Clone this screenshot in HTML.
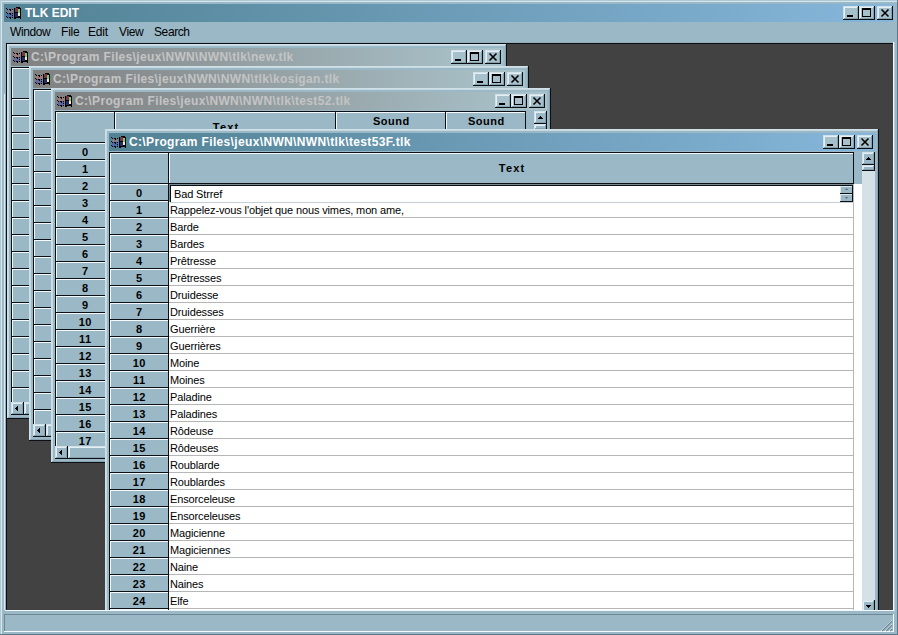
<!DOCTYPE html><html><head><meta charset="utf-8"><style>
html,body{margin:0;padding:0;}
body{width:898px;height:635px;overflow:hidden;position:relative;background:#9bb8c6;font-family:'Liberation Sans', sans-serif;}
div{position:absolute;box-sizing:border-box;}
</style></head><body>
<div style="left:0px;top:0px;width:898px;height:635px;background:#9bb8c6;"></div>
<div style="left:0px;top:0px;width:898px;height:1px;background:#b0c8d4;"></div>
<div style="left:0px;top:0px;width:1px;height:635px;background:#b0c8d4;"></div>
<div style="left:1px;top:1px;width:896px;height:1px;background:#d4e6ee;"></div>
<div style="left:1px;top:1px;width:1px;height:633px;background:#d4e6ee;"></div>
<div style="left:0px;top:634px;width:898px;height:1px;background:#5a788a;"></div>
<div style="left:897px;top:0px;width:1px;height:635px;background:#5a788a;"></div>
<div style="left:4px;top:4px;width:890px;height:18px;background:linear-gradient(to right,#528294,#86b6da);"></div>
<svg style="position:absolute;left:6px;top:7px" width="16" height="13" viewBox="0 0 16 13" shape-rendering="crispEdges">
<rect x="1" y="2" width="6" height="4" fill="#c07080" opacity="0.4"/>
<rect x="1" y="6" width="6" height="5" fill="#4050c0" opacity="0.5"/>
<g fill="#000">
<rect x="0" y="1" width="1" height="1"/><rect x="1" y="2" width="1" height="1"/><rect x="0" y="5" width="1" height="1"/><rect x="1" y="6" width="1" height="1"/><rect x="0" y="9" width="1" height="1"/><rect x="1" y="10" width="1" height="1"/>
<rect x="3" y="2" width="2" height="1"/><rect x="4" y="3" width="1" height="1"/><rect x="3" y="6" width="2" height="1"/><rect x="4" y="7" width="1" height="1"/><rect x="3" y="10" width="2" height="1"/><rect x="4" y="11" width="1" height="1"/>
<rect x="6" y="2" width="1" height="1"/><rect x="6" y="6" width="1" height="1"/><rect x="6" y="8" width="1" height="1"/><rect x="6" y="10" width="1" height="1"/>
</g>
<path d="M8 1h2v-1h4v1h1v11h-1v-1h-4v1h-2z" fill="#000"/>
<rect x="9" y="1" width="3" height="4" fill="#7a3444"/>
<rect x="12" y="2" width="2" height="4" fill="#78c880"/>
<rect x="9" y="6" width="3" height="4" fill="#222a70"/>
<rect x="12" y="6" width="2" height="3" fill="#f4ecb0"/>
</svg>
<div style="left:25px;top:7px;font:bold 12px/13px 'Liberation Sans', sans-serif;color:#fff;letter-spacing:0px;white-space:pre;">TLK EDIT</div>
<div style="left:843px;top:6px;width:16px;height:14px;background:#a6c0cc;"></div>
<div style="left:843px;top:6px;width:16px;height:1px;background:#d2e2ea;"></div>
<div style="left:843px;top:6px;width:1px;height:14px;background:#d2e2ea;"></div>
<div style="left:844px;top:7px;width:14px;height:1px;background:#e4eef3;"></div>
<div style="left:844px;top:7px;width:1px;height:12px;background:#e4eef3;"></div>
<div style="left:844px;top:18px;width:14px;height:1px;background:#86a0ae;"></div>
<div style="left:857px;top:7px;width:1px;height:12px;background:#86a0ae;"></div>
<div style="left:843px;top:19px;width:16px;height:1px;background:#0c1014;"></div>
<div style="left:858px;top:6px;width:1px;height:14px;background:#0c1014;"></div>
<div style="left:847px;top:15px;width:6px;height:2px;background:#000;"></div>
<div style="left:859px;top:6px;width:16px;height:14px;background:#a6c0cc;"></div>
<div style="left:859px;top:6px;width:16px;height:1px;background:#d2e2ea;"></div>
<div style="left:859px;top:6px;width:1px;height:14px;background:#d2e2ea;"></div>
<div style="left:860px;top:7px;width:14px;height:1px;background:#e4eef3;"></div>
<div style="left:860px;top:7px;width:1px;height:12px;background:#e4eef3;"></div>
<div style="left:860px;top:18px;width:14px;height:1px;background:#86a0ae;"></div>
<div style="left:873px;top:7px;width:1px;height:12px;background:#86a0ae;"></div>
<div style="left:859px;top:19px;width:16px;height:1px;background:#0c1014;"></div>
<div style="left:874px;top:6px;width:1px;height:14px;background:#0c1014;"></div>
<div style="left:862px;top:8px;width:9px;height:9px;border:1px solid #000;border-top-width:2px;box-sizing:border-box;"></div>
<div style="left:877px;top:6px;width:16px;height:14px;background:#a6c0cc;"></div>
<div style="left:877px;top:6px;width:16px;height:1px;background:#d2e2ea;"></div>
<div style="left:877px;top:6px;width:1px;height:14px;background:#d2e2ea;"></div>
<div style="left:878px;top:7px;width:14px;height:1px;background:#e4eef3;"></div>
<div style="left:878px;top:7px;width:1px;height:12px;background:#e4eef3;"></div>
<div style="left:878px;top:18px;width:14px;height:1px;background:#86a0ae;"></div>
<div style="left:891px;top:7px;width:1px;height:12px;background:#86a0ae;"></div>
<div style="left:877px;top:19px;width:16px;height:1px;background:#0c1014;"></div>
<div style="left:892px;top:6px;width:1px;height:14px;background:#0c1014;"></div>
<svg style="position:absolute;left:877px;top:6px" width="16" height="14" viewBox="0 0 16 14"><path d="M4.5 3.5L11.5 10.5M11.5 3.5L4.5 10.5" stroke="#000" stroke-width="1.6" fill="none"/></svg>
<div style="left:10px;top:26px;font:normal 12px/13px 'Liberation Sans', sans-serif;color:#000;letter-spacing:-0.4px;white-space:pre;">Window</div>
<div style="left:61px;top:26px;font:normal 12px/13px 'Liberation Sans', sans-serif;color:#000;letter-spacing:-0.2px;white-space:pre;">File</div>
<div style="left:88px;top:26px;font:normal 12px/13px 'Liberation Sans', sans-serif;color:#000;letter-spacing:-0.2px;white-space:pre;">Edit</div>
<div style="left:119px;top:26px;font:normal 12px/13px 'Liberation Sans', sans-serif;color:#000;letter-spacing:-0.4px;white-space:pre;">View</div>
<div style="left:154px;top:26px;font:normal 12px/13px 'Liberation Sans', sans-serif;color:#000;letter-spacing:-0.4px;white-space:pre;">Search</div>
<div style="left:5px;top:42px;width:889px;height:1px;background:#94adba;"></div>
<div style="left:5px;top:42px;width:1px;height:570px;background:#94adba;"></div>
<div style="left:6px;top:43px;width:888px;height:1px;background:#0c1014;"></div>
<div style="left:6px;top:43px;width:1px;height:568px;background:#0c1014;"></div>
<div style="left:5px;top:610px;width:890px;height:1px;background:#f2f8fb;"></div>
<div style="left:893px;top:42px;width:1px;height:569px;background:#f2f8fb;"></div>
<div style="left:894px;top:42px;width:1px;height:570px;background:#b9cdd8;"></div>
<div style="left:4px;top:94px;width:1px;height:516px;background:#dfecf1;"></div>
<div style="left:7px;top:44px;width:886px;height:566px;overflow:hidden;background:#424242">
<div style="left:0px;top:0px;width:500px;height:375px;background:#9bb8c6;"></div>
<div style="left:0px;top:0px;width:500px;height:1px;background:#cfe0e8;"></div>
<div style="left:0px;top:0px;width:1px;height:375px;background:#cfe0e8;"></div>
<div style="left:1px;top:1px;width:498px;height:1px;background:#c6d8e0;"></div>
<div style="left:1px;top:1px;width:1px;height:373px;background:#c6d8e0;"></div>
<div style="left:1px;top:373px;width:498px;height:1px;background:#8aa4b2;"></div>
<div style="left:498px;top:1px;width:1px;height:373px;background:#8aa4b2;"></div>
<div style="left:0px;top:374px;width:500px;height:1px;background:#0c1014;"></div>
<div style="left:499px;top:0px;width:1px;height:375px;background:#0c1014;"></div>
<div style="left:4px;top:4px;width:492px;height:18px;background:linear-gradient(to right,#808080,#aac4cc);"></div>
<svg style="position:absolute;left:6px;top:7px" width="16" height="13" viewBox="0 0 16 13" shape-rendering="crispEdges">
<rect x="1" y="2" width="6" height="4" fill="#c07080" opacity="0.4"/>
<rect x="1" y="6" width="6" height="5" fill="#4050c0" opacity="0.5"/>
<g fill="#000">
<rect x="0" y="1" width="1" height="1"/><rect x="1" y="2" width="1" height="1"/><rect x="0" y="5" width="1" height="1"/><rect x="1" y="6" width="1" height="1"/><rect x="0" y="9" width="1" height="1"/><rect x="1" y="10" width="1" height="1"/>
<rect x="3" y="2" width="2" height="1"/><rect x="4" y="3" width="1" height="1"/><rect x="3" y="6" width="2" height="1"/><rect x="4" y="7" width="1" height="1"/><rect x="3" y="10" width="2" height="1"/><rect x="4" y="11" width="1" height="1"/>
<rect x="6" y="2" width="1" height="1"/><rect x="6" y="6" width="1" height="1"/><rect x="6" y="8" width="1" height="1"/><rect x="6" y="10" width="1" height="1"/>
</g>
<path d="M8 1h2v-1h4v1h1v11h-1v-1h-4v1h-2z" fill="#000"/>
<rect x="9" y="1" width="3" height="4" fill="#7a3444"/>
<rect x="12" y="2" width="2" height="4" fill="#78c880"/>
<rect x="9" y="6" width="3" height="4" fill="#222a70"/>
<rect x="12" y="6" width="2" height="3" fill="#f4ecb0"/>
</svg>
<div style="left:24px;top:7px;font:bold 12px/13px 'Liberation Sans', sans-serif;color:#c4c4c4;letter-spacing:0.35px;white-space:pre;">C:\Program Files\jeux\NWN\NWN\tlk\new.tlk</div>
<div style="left:444px;top:6px;width:16px;height:14px;background:#a6c0cc;"></div>
<div style="left:444px;top:6px;width:16px;height:1px;background:#d2e2ea;"></div>
<div style="left:444px;top:6px;width:1px;height:14px;background:#d2e2ea;"></div>
<div style="left:445px;top:7px;width:14px;height:1px;background:#e4eef3;"></div>
<div style="left:445px;top:7px;width:1px;height:12px;background:#e4eef3;"></div>
<div style="left:445px;top:18px;width:14px;height:1px;background:#86a0ae;"></div>
<div style="left:458px;top:7px;width:1px;height:12px;background:#86a0ae;"></div>
<div style="left:444px;top:19px;width:16px;height:1px;background:#0c1014;"></div>
<div style="left:459px;top:6px;width:1px;height:14px;background:#0c1014;"></div>
<div style="left:448px;top:15px;width:6px;height:2px;background:#000;"></div>
<div style="left:460px;top:6px;width:16px;height:14px;background:#a6c0cc;"></div>
<div style="left:460px;top:6px;width:16px;height:1px;background:#d2e2ea;"></div>
<div style="left:460px;top:6px;width:1px;height:14px;background:#d2e2ea;"></div>
<div style="left:461px;top:7px;width:14px;height:1px;background:#e4eef3;"></div>
<div style="left:461px;top:7px;width:1px;height:12px;background:#e4eef3;"></div>
<div style="left:461px;top:18px;width:14px;height:1px;background:#86a0ae;"></div>
<div style="left:474px;top:7px;width:1px;height:12px;background:#86a0ae;"></div>
<div style="left:460px;top:19px;width:16px;height:1px;background:#0c1014;"></div>
<div style="left:475px;top:6px;width:1px;height:14px;background:#0c1014;"></div>
<div style="left:463px;top:8px;width:9px;height:9px;border:1px solid #000;border-top-width:2px;box-sizing:border-box;"></div>
<div style="left:478px;top:6px;width:16px;height:14px;background:#a6c0cc;"></div>
<div style="left:478px;top:6px;width:16px;height:1px;background:#d2e2ea;"></div>
<div style="left:478px;top:6px;width:1px;height:14px;background:#d2e2ea;"></div>
<div style="left:479px;top:7px;width:14px;height:1px;background:#e4eef3;"></div>
<div style="left:479px;top:7px;width:1px;height:12px;background:#e4eef3;"></div>
<div style="left:479px;top:18px;width:14px;height:1px;background:#86a0ae;"></div>
<div style="left:492px;top:7px;width:1px;height:12px;background:#86a0ae;"></div>
<div style="left:478px;top:19px;width:16px;height:1px;background:#0c1014;"></div>
<div style="left:493px;top:6px;width:1px;height:14px;background:#0c1014;"></div>
<svg style="position:absolute;left:478px;top:6px" width="16" height="14" viewBox="0 0 16 14"><path d="M4.5 3.5L11.5 10.5M11.5 3.5L4.5 10.5" stroke="#000" stroke-width="1.6" fill="none"/></svg>
<div style="left:4px;top:23px;width:492px;height:348px;overflow:hidden;background:#fff">
<div style="left:0px;top:0px;width:479px;height:335px;background:#fff;"></div>
<div style="left:0px;top:0px;width:479px;height:32px;background:#9bb8c6;"></div>
<div style="left:0px;top:0px;width:1px;height:335px;background:#0c1014;"></div>
<div style="left:1px;top:1px;width:59px;height:31px;background:#9bb8c6;"></div>
<div style="left:1px;top:1px;width:58px;height:1px;background:#f2f8fb;"></div>
<div style="left:1px;top:1px;width:1px;height:30px;background:#f2f8fb;"></div>
<div style="left:1px;top:31px;width:59px;height:1px;background:#0c1014;"></div>
<div style="left:59px;top:1px;width:1px;height:31px;background:#0c1014;"></div>
<div style="left:60px;top:1px;width:221px;height:31px;background:#9bb8c6;"></div>
<div style="left:60px;top:1px;width:220px;height:1px;background:#f2f8fb;"></div>
<div style="left:60px;top:1px;width:1px;height:30px;background:#f2f8fb;"></div>
<div style="left:60px;top:31px;width:221px;height:1px;background:#0c1014;"></div>
<div style="left:280px;top:1px;width:1px;height:31px;background:#0c1014;"></div>
<div style="left:60.6px;top:10px;font:bold 11px/13px 'Liberation Sans', sans-serif;color:#000;letter-spacing:1.2px;white-space:pre;width:221px;text-align:center;">Text</div>
<div style="left:281px;top:1px;width:110px;height:31px;background:#9bb8c6;"></div>
<div style="left:281px;top:1px;width:109px;height:1px;background:#f2f8fb;"></div>
<div style="left:281px;top:1px;width:1px;height:30px;background:#f2f8fb;"></div>
<div style="left:281px;top:31px;width:110px;height:1px;background:#0c1014;"></div>
<div style="left:390px;top:1px;width:1px;height:31px;background:#0c1014;"></div>
<div style="left:281.25px;top:4px;font:bold 11px/13px 'Liberation Sans', sans-serif;color:#000;letter-spacing:0.5px;white-space:pre;width:110px;text-align:center;">Sound</div>
<div style="left:391px;top:1px;width:80px;height:31px;background:#9bb8c6;"></div>
<div style="left:391px;top:1px;width:79px;height:1px;background:#f2f8fb;"></div>
<div style="left:391px;top:1px;width:1px;height:30px;background:#f2f8fb;"></div>
<div style="left:391px;top:31px;width:80px;height:1px;background:#0c1014;"></div>
<div style="left:470px;top:1px;width:1px;height:31px;background:#0c1014;"></div>
<div style="left:391.25px;top:4px;font:bold 11px/13px 'Liberation Sans', sans-serif;color:#000;letter-spacing:0.5px;white-space:pre;width:80px;text-align:center;">Sound</div>
<div style="left:0px;top:0px;width:471px;height:1px;background:#0c1014;"></div>
<div style="left:1px;top:32px;width:59px;height:17px;background:#9bb8c6;"></div>
<div style="left:1px;top:32px;width:58px;height:1px;background:#f2f8fb;"></div>
<div style="left:1px;top:32px;width:1px;height:16px;background:#f2f8fb;"></div>
<div style="left:1px;top:48px;width:59px;height:1px;background:#0c1014;"></div>
<div style="left:59px;top:32px;width:1px;height:17px;background:#0c1014;"></div>
<div style="left:0px;top:35px;font:bold 11px/13px 'Liberation Sans', sans-serif;color:#000;letter-spacing:0px;white-space:pre;width:60px;text-align:center;">0</div>
<div style="left:60px;top:48px;width:221px;height:1px;background:#b6b6b6;"></div>
<div style="left:280px;top:32px;width:1px;height:17px;background:#b6b6b6;"></div>
<div style="left:281px;top:48px;width:110px;height:1px;background:#b6b6b6;"></div>
<div style="left:390px;top:32px;width:1px;height:17px;background:#b6b6b6;"></div>
<div style="left:391px;top:48px;width:80px;height:1px;background:#b6b6b6;"></div>
<div style="left:470px;top:32px;width:1px;height:17px;background:#b6b6b6;"></div>
<div style="left:1px;top:49px;width:59px;height:17px;background:#9bb8c6;"></div>
<div style="left:1px;top:49px;width:58px;height:1px;background:#f2f8fb;"></div>
<div style="left:1px;top:49px;width:1px;height:16px;background:#f2f8fb;"></div>
<div style="left:1px;top:65px;width:59px;height:1px;background:#0c1014;"></div>
<div style="left:59px;top:49px;width:1px;height:17px;background:#0c1014;"></div>
<div style="left:0px;top:52px;font:bold 11px/13px 'Liberation Sans', sans-serif;color:#000;letter-spacing:0px;white-space:pre;width:60px;text-align:center;">1</div>
<div style="left:60px;top:65px;width:221px;height:1px;background:#b6b6b6;"></div>
<div style="left:280px;top:49px;width:1px;height:17px;background:#b6b6b6;"></div>
<div style="left:281px;top:65px;width:110px;height:1px;background:#b6b6b6;"></div>
<div style="left:390px;top:49px;width:1px;height:17px;background:#b6b6b6;"></div>
<div style="left:391px;top:65px;width:80px;height:1px;background:#b6b6b6;"></div>
<div style="left:470px;top:49px;width:1px;height:17px;background:#b6b6b6;"></div>
<div style="left:1px;top:66px;width:59px;height:17px;background:#9bb8c6;"></div>
<div style="left:1px;top:66px;width:58px;height:1px;background:#f2f8fb;"></div>
<div style="left:1px;top:66px;width:1px;height:16px;background:#f2f8fb;"></div>
<div style="left:1px;top:82px;width:59px;height:1px;background:#0c1014;"></div>
<div style="left:59px;top:66px;width:1px;height:17px;background:#0c1014;"></div>
<div style="left:0px;top:69px;font:bold 11px/13px 'Liberation Sans', sans-serif;color:#000;letter-spacing:0px;white-space:pre;width:60px;text-align:center;">2</div>
<div style="left:60px;top:82px;width:221px;height:1px;background:#b6b6b6;"></div>
<div style="left:280px;top:66px;width:1px;height:17px;background:#b6b6b6;"></div>
<div style="left:281px;top:82px;width:110px;height:1px;background:#b6b6b6;"></div>
<div style="left:390px;top:66px;width:1px;height:17px;background:#b6b6b6;"></div>
<div style="left:391px;top:82px;width:80px;height:1px;background:#b6b6b6;"></div>
<div style="left:470px;top:66px;width:1px;height:17px;background:#b6b6b6;"></div>
<div style="left:1px;top:83px;width:59px;height:17px;background:#9bb8c6;"></div>
<div style="left:1px;top:83px;width:58px;height:1px;background:#f2f8fb;"></div>
<div style="left:1px;top:83px;width:1px;height:16px;background:#f2f8fb;"></div>
<div style="left:1px;top:99px;width:59px;height:1px;background:#0c1014;"></div>
<div style="left:59px;top:83px;width:1px;height:17px;background:#0c1014;"></div>
<div style="left:0px;top:86px;font:bold 11px/13px 'Liberation Sans', sans-serif;color:#000;letter-spacing:0px;white-space:pre;width:60px;text-align:center;">3</div>
<div style="left:60px;top:99px;width:221px;height:1px;background:#b6b6b6;"></div>
<div style="left:280px;top:83px;width:1px;height:17px;background:#b6b6b6;"></div>
<div style="left:281px;top:99px;width:110px;height:1px;background:#b6b6b6;"></div>
<div style="left:390px;top:83px;width:1px;height:17px;background:#b6b6b6;"></div>
<div style="left:391px;top:99px;width:80px;height:1px;background:#b6b6b6;"></div>
<div style="left:470px;top:83px;width:1px;height:17px;background:#b6b6b6;"></div>
<div style="left:1px;top:100px;width:59px;height:17px;background:#9bb8c6;"></div>
<div style="left:1px;top:100px;width:58px;height:1px;background:#f2f8fb;"></div>
<div style="left:1px;top:100px;width:1px;height:16px;background:#f2f8fb;"></div>
<div style="left:1px;top:116px;width:59px;height:1px;background:#0c1014;"></div>
<div style="left:59px;top:100px;width:1px;height:17px;background:#0c1014;"></div>
<div style="left:0px;top:103px;font:bold 11px/13px 'Liberation Sans', sans-serif;color:#000;letter-spacing:0px;white-space:pre;width:60px;text-align:center;">4</div>
<div style="left:60px;top:116px;width:221px;height:1px;background:#b6b6b6;"></div>
<div style="left:280px;top:100px;width:1px;height:17px;background:#b6b6b6;"></div>
<div style="left:281px;top:116px;width:110px;height:1px;background:#b6b6b6;"></div>
<div style="left:390px;top:100px;width:1px;height:17px;background:#b6b6b6;"></div>
<div style="left:391px;top:116px;width:80px;height:1px;background:#b6b6b6;"></div>
<div style="left:470px;top:100px;width:1px;height:17px;background:#b6b6b6;"></div>
<div style="left:1px;top:117px;width:59px;height:17px;background:#9bb8c6;"></div>
<div style="left:1px;top:117px;width:58px;height:1px;background:#f2f8fb;"></div>
<div style="left:1px;top:117px;width:1px;height:16px;background:#f2f8fb;"></div>
<div style="left:1px;top:133px;width:59px;height:1px;background:#0c1014;"></div>
<div style="left:59px;top:117px;width:1px;height:17px;background:#0c1014;"></div>
<div style="left:0px;top:120px;font:bold 11px/13px 'Liberation Sans', sans-serif;color:#000;letter-spacing:0px;white-space:pre;width:60px;text-align:center;">5</div>
<div style="left:60px;top:133px;width:221px;height:1px;background:#b6b6b6;"></div>
<div style="left:280px;top:117px;width:1px;height:17px;background:#b6b6b6;"></div>
<div style="left:281px;top:133px;width:110px;height:1px;background:#b6b6b6;"></div>
<div style="left:390px;top:117px;width:1px;height:17px;background:#b6b6b6;"></div>
<div style="left:391px;top:133px;width:80px;height:1px;background:#b6b6b6;"></div>
<div style="left:470px;top:117px;width:1px;height:17px;background:#b6b6b6;"></div>
<div style="left:1px;top:134px;width:59px;height:17px;background:#9bb8c6;"></div>
<div style="left:1px;top:134px;width:58px;height:1px;background:#f2f8fb;"></div>
<div style="left:1px;top:134px;width:1px;height:16px;background:#f2f8fb;"></div>
<div style="left:1px;top:150px;width:59px;height:1px;background:#0c1014;"></div>
<div style="left:59px;top:134px;width:1px;height:17px;background:#0c1014;"></div>
<div style="left:0px;top:137px;font:bold 11px/13px 'Liberation Sans', sans-serif;color:#000;letter-spacing:0px;white-space:pre;width:60px;text-align:center;">6</div>
<div style="left:60px;top:150px;width:221px;height:1px;background:#b6b6b6;"></div>
<div style="left:280px;top:134px;width:1px;height:17px;background:#b6b6b6;"></div>
<div style="left:281px;top:150px;width:110px;height:1px;background:#b6b6b6;"></div>
<div style="left:390px;top:134px;width:1px;height:17px;background:#b6b6b6;"></div>
<div style="left:391px;top:150px;width:80px;height:1px;background:#b6b6b6;"></div>
<div style="left:470px;top:134px;width:1px;height:17px;background:#b6b6b6;"></div>
<div style="left:1px;top:151px;width:59px;height:17px;background:#9bb8c6;"></div>
<div style="left:1px;top:151px;width:58px;height:1px;background:#f2f8fb;"></div>
<div style="left:1px;top:151px;width:1px;height:16px;background:#f2f8fb;"></div>
<div style="left:1px;top:167px;width:59px;height:1px;background:#0c1014;"></div>
<div style="left:59px;top:151px;width:1px;height:17px;background:#0c1014;"></div>
<div style="left:0px;top:154px;font:bold 11px/13px 'Liberation Sans', sans-serif;color:#000;letter-spacing:0px;white-space:pre;width:60px;text-align:center;">7</div>
<div style="left:60px;top:167px;width:221px;height:1px;background:#b6b6b6;"></div>
<div style="left:280px;top:151px;width:1px;height:17px;background:#b6b6b6;"></div>
<div style="left:281px;top:167px;width:110px;height:1px;background:#b6b6b6;"></div>
<div style="left:390px;top:151px;width:1px;height:17px;background:#b6b6b6;"></div>
<div style="left:391px;top:167px;width:80px;height:1px;background:#b6b6b6;"></div>
<div style="left:470px;top:151px;width:1px;height:17px;background:#b6b6b6;"></div>
<div style="left:1px;top:168px;width:59px;height:17px;background:#9bb8c6;"></div>
<div style="left:1px;top:168px;width:58px;height:1px;background:#f2f8fb;"></div>
<div style="left:1px;top:168px;width:1px;height:16px;background:#f2f8fb;"></div>
<div style="left:1px;top:184px;width:59px;height:1px;background:#0c1014;"></div>
<div style="left:59px;top:168px;width:1px;height:17px;background:#0c1014;"></div>
<div style="left:0px;top:171px;font:bold 11px/13px 'Liberation Sans', sans-serif;color:#000;letter-spacing:0px;white-space:pre;width:60px;text-align:center;">8</div>
<div style="left:60px;top:184px;width:221px;height:1px;background:#b6b6b6;"></div>
<div style="left:280px;top:168px;width:1px;height:17px;background:#b6b6b6;"></div>
<div style="left:281px;top:184px;width:110px;height:1px;background:#b6b6b6;"></div>
<div style="left:390px;top:168px;width:1px;height:17px;background:#b6b6b6;"></div>
<div style="left:391px;top:184px;width:80px;height:1px;background:#b6b6b6;"></div>
<div style="left:470px;top:168px;width:1px;height:17px;background:#b6b6b6;"></div>
<div style="left:1px;top:185px;width:59px;height:17px;background:#9bb8c6;"></div>
<div style="left:1px;top:185px;width:58px;height:1px;background:#f2f8fb;"></div>
<div style="left:1px;top:185px;width:1px;height:16px;background:#f2f8fb;"></div>
<div style="left:1px;top:201px;width:59px;height:1px;background:#0c1014;"></div>
<div style="left:59px;top:185px;width:1px;height:17px;background:#0c1014;"></div>
<div style="left:0px;top:188px;font:bold 11px/13px 'Liberation Sans', sans-serif;color:#000;letter-spacing:0px;white-space:pre;width:60px;text-align:center;">9</div>
<div style="left:60px;top:201px;width:221px;height:1px;background:#b6b6b6;"></div>
<div style="left:280px;top:185px;width:1px;height:17px;background:#b6b6b6;"></div>
<div style="left:281px;top:201px;width:110px;height:1px;background:#b6b6b6;"></div>
<div style="left:390px;top:185px;width:1px;height:17px;background:#b6b6b6;"></div>
<div style="left:391px;top:201px;width:80px;height:1px;background:#b6b6b6;"></div>
<div style="left:470px;top:185px;width:1px;height:17px;background:#b6b6b6;"></div>
<div style="left:1px;top:202px;width:59px;height:17px;background:#9bb8c6;"></div>
<div style="left:1px;top:202px;width:58px;height:1px;background:#f2f8fb;"></div>
<div style="left:1px;top:202px;width:1px;height:16px;background:#f2f8fb;"></div>
<div style="left:1px;top:218px;width:59px;height:1px;background:#0c1014;"></div>
<div style="left:59px;top:202px;width:1px;height:17px;background:#0c1014;"></div>
<div style="left:0.25px;top:205px;font:bold 11px/13px 'Liberation Sans', sans-serif;color:#000;letter-spacing:0.5px;white-space:pre;width:60px;text-align:center;">10</div>
<div style="left:60px;top:218px;width:221px;height:1px;background:#b6b6b6;"></div>
<div style="left:280px;top:202px;width:1px;height:17px;background:#b6b6b6;"></div>
<div style="left:281px;top:218px;width:110px;height:1px;background:#b6b6b6;"></div>
<div style="left:390px;top:202px;width:1px;height:17px;background:#b6b6b6;"></div>
<div style="left:391px;top:218px;width:80px;height:1px;background:#b6b6b6;"></div>
<div style="left:470px;top:202px;width:1px;height:17px;background:#b6b6b6;"></div>
<div style="left:1px;top:219px;width:59px;height:17px;background:#9bb8c6;"></div>
<div style="left:1px;top:219px;width:58px;height:1px;background:#f2f8fb;"></div>
<div style="left:1px;top:219px;width:1px;height:16px;background:#f2f8fb;"></div>
<div style="left:1px;top:235px;width:59px;height:1px;background:#0c1014;"></div>
<div style="left:59px;top:219px;width:1px;height:17px;background:#0c1014;"></div>
<div style="left:0.25px;top:222px;font:bold 11px/13px 'Liberation Sans', sans-serif;color:#000;letter-spacing:0.5px;white-space:pre;width:60px;text-align:center;">11</div>
<div style="left:60px;top:235px;width:221px;height:1px;background:#b6b6b6;"></div>
<div style="left:280px;top:219px;width:1px;height:17px;background:#b6b6b6;"></div>
<div style="left:281px;top:235px;width:110px;height:1px;background:#b6b6b6;"></div>
<div style="left:390px;top:219px;width:1px;height:17px;background:#b6b6b6;"></div>
<div style="left:391px;top:235px;width:80px;height:1px;background:#b6b6b6;"></div>
<div style="left:470px;top:219px;width:1px;height:17px;background:#b6b6b6;"></div>
<div style="left:1px;top:236px;width:59px;height:17px;background:#9bb8c6;"></div>
<div style="left:1px;top:236px;width:58px;height:1px;background:#f2f8fb;"></div>
<div style="left:1px;top:236px;width:1px;height:16px;background:#f2f8fb;"></div>
<div style="left:1px;top:252px;width:59px;height:1px;background:#0c1014;"></div>
<div style="left:59px;top:236px;width:1px;height:17px;background:#0c1014;"></div>
<div style="left:0.25px;top:239px;font:bold 11px/13px 'Liberation Sans', sans-serif;color:#000;letter-spacing:0.5px;white-space:pre;width:60px;text-align:center;">12</div>
<div style="left:60px;top:252px;width:221px;height:1px;background:#b6b6b6;"></div>
<div style="left:280px;top:236px;width:1px;height:17px;background:#b6b6b6;"></div>
<div style="left:281px;top:252px;width:110px;height:1px;background:#b6b6b6;"></div>
<div style="left:390px;top:236px;width:1px;height:17px;background:#b6b6b6;"></div>
<div style="left:391px;top:252px;width:80px;height:1px;background:#b6b6b6;"></div>
<div style="left:470px;top:236px;width:1px;height:17px;background:#b6b6b6;"></div>
<div style="left:1px;top:253px;width:59px;height:17px;background:#9bb8c6;"></div>
<div style="left:1px;top:253px;width:58px;height:1px;background:#f2f8fb;"></div>
<div style="left:1px;top:253px;width:1px;height:16px;background:#f2f8fb;"></div>
<div style="left:1px;top:269px;width:59px;height:1px;background:#0c1014;"></div>
<div style="left:59px;top:253px;width:1px;height:17px;background:#0c1014;"></div>
<div style="left:0.25px;top:256px;font:bold 11px/13px 'Liberation Sans', sans-serif;color:#000;letter-spacing:0.5px;white-space:pre;width:60px;text-align:center;">13</div>
<div style="left:60px;top:269px;width:221px;height:1px;background:#b6b6b6;"></div>
<div style="left:280px;top:253px;width:1px;height:17px;background:#b6b6b6;"></div>
<div style="left:281px;top:269px;width:110px;height:1px;background:#b6b6b6;"></div>
<div style="left:390px;top:253px;width:1px;height:17px;background:#b6b6b6;"></div>
<div style="left:391px;top:269px;width:80px;height:1px;background:#b6b6b6;"></div>
<div style="left:470px;top:253px;width:1px;height:17px;background:#b6b6b6;"></div>
<div style="left:1px;top:270px;width:59px;height:17px;background:#9bb8c6;"></div>
<div style="left:1px;top:270px;width:58px;height:1px;background:#f2f8fb;"></div>
<div style="left:1px;top:270px;width:1px;height:16px;background:#f2f8fb;"></div>
<div style="left:1px;top:286px;width:59px;height:1px;background:#0c1014;"></div>
<div style="left:59px;top:270px;width:1px;height:17px;background:#0c1014;"></div>
<div style="left:0.25px;top:273px;font:bold 11px/13px 'Liberation Sans', sans-serif;color:#000;letter-spacing:0.5px;white-space:pre;width:60px;text-align:center;">14</div>
<div style="left:60px;top:286px;width:221px;height:1px;background:#b6b6b6;"></div>
<div style="left:280px;top:270px;width:1px;height:17px;background:#b6b6b6;"></div>
<div style="left:281px;top:286px;width:110px;height:1px;background:#b6b6b6;"></div>
<div style="left:390px;top:270px;width:1px;height:17px;background:#b6b6b6;"></div>
<div style="left:391px;top:286px;width:80px;height:1px;background:#b6b6b6;"></div>
<div style="left:470px;top:270px;width:1px;height:17px;background:#b6b6b6;"></div>
<div style="left:1px;top:287px;width:59px;height:17px;background:#9bb8c6;"></div>
<div style="left:1px;top:287px;width:58px;height:1px;background:#f2f8fb;"></div>
<div style="left:1px;top:287px;width:1px;height:16px;background:#f2f8fb;"></div>
<div style="left:1px;top:303px;width:59px;height:1px;background:#0c1014;"></div>
<div style="left:59px;top:287px;width:1px;height:17px;background:#0c1014;"></div>
<div style="left:0.25px;top:290px;font:bold 11px/13px 'Liberation Sans', sans-serif;color:#000;letter-spacing:0.5px;white-space:pre;width:60px;text-align:center;">15</div>
<div style="left:60px;top:303px;width:221px;height:1px;background:#b6b6b6;"></div>
<div style="left:280px;top:287px;width:1px;height:17px;background:#b6b6b6;"></div>
<div style="left:281px;top:303px;width:110px;height:1px;background:#b6b6b6;"></div>
<div style="left:390px;top:287px;width:1px;height:17px;background:#b6b6b6;"></div>
<div style="left:391px;top:303px;width:80px;height:1px;background:#b6b6b6;"></div>
<div style="left:470px;top:287px;width:1px;height:17px;background:#b6b6b6;"></div>
<div style="left:1px;top:304px;width:59px;height:17px;background:#9bb8c6;"></div>
<div style="left:1px;top:304px;width:58px;height:1px;background:#f2f8fb;"></div>
<div style="left:1px;top:304px;width:1px;height:16px;background:#f2f8fb;"></div>
<div style="left:1px;top:320px;width:59px;height:1px;background:#0c1014;"></div>
<div style="left:59px;top:304px;width:1px;height:17px;background:#0c1014;"></div>
<div style="left:0.25px;top:307px;font:bold 11px/13px 'Liberation Sans', sans-serif;color:#000;letter-spacing:0.5px;white-space:pre;width:60px;text-align:center;">16</div>
<div style="left:60px;top:320px;width:221px;height:1px;background:#b6b6b6;"></div>
<div style="left:280px;top:304px;width:1px;height:17px;background:#b6b6b6;"></div>
<div style="left:281px;top:320px;width:110px;height:1px;background:#b6b6b6;"></div>
<div style="left:390px;top:304px;width:1px;height:17px;background:#b6b6b6;"></div>
<div style="left:391px;top:320px;width:80px;height:1px;background:#b6b6b6;"></div>
<div style="left:470px;top:304px;width:1px;height:17px;background:#b6b6b6;"></div>
<div style="left:1px;top:321px;width:59px;height:17px;background:#9bb8c6;"></div>
<div style="left:1px;top:321px;width:58px;height:1px;background:#f2f8fb;"></div>
<div style="left:1px;top:321px;width:1px;height:16px;background:#f2f8fb;"></div>
<div style="left:1px;top:337px;width:59px;height:1px;background:#0c1014;"></div>
<div style="left:59px;top:321px;width:1px;height:17px;background:#0c1014;"></div>
<div style="left:0.25px;top:324px;font:bold 11px/13px 'Liberation Sans', sans-serif;color:#000;letter-spacing:0.5px;white-space:pre;width:60px;text-align:center;">17</div>
<div style="left:60px;top:337px;width:221px;height:1px;background:#b6b6b6;"></div>
<div style="left:280px;top:321px;width:1px;height:17px;background:#b6b6b6;"></div>
<div style="left:281px;top:337px;width:110px;height:1px;background:#b6b6b6;"></div>
<div style="left:390px;top:321px;width:1px;height:17px;background:#b6b6b6;"></div>
<div style="left:391px;top:337px;width:80px;height:1px;background:#b6b6b6;"></div>
<div style="left:470px;top:321px;width:1px;height:17px;background:#b6b6b6;"></div>
<div style="left:479px;top:0px;width:13px;height:335px;background:#d4e2e8;"></div>
<div style="left:479px;top:0px;width:13px;height:13px;background:#9bb8c6;"></div>
<div style="left:479px;top:0px;width:13px;height:1px;background:#d2e2ea;"></div>
<div style="left:479px;top:0px;width:1px;height:13px;background:#d2e2ea;"></div>
<div style="left:480px;top:1px;width:11px;height:1px;background:#e4eef3;"></div>
<div style="left:480px;top:1px;width:1px;height:11px;background:#e4eef3;"></div>
<div style="left:480px;top:11px;width:11px;height:1px;background:#86a0ae;"></div>
<div style="left:490px;top:1px;width:1px;height:11px;background:#86a0ae;"></div>
<div style="left:479px;top:12px;width:13px;height:1px;background:#0c1014;"></div>
<div style="left:491px;top:0px;width:1px;height:13px;background:#0c1014;"></div>
<div style="left:485px;top:5px;width:1px;height:1px;background:#000;"></div>
<div style="left:484px;top:6px;width:3px;height:1px;background:#000;"></div>
<div style="left:483px;top:7px;width:5px;height:1px;background:#000;"></div>
<div style="left:479px;top:322px;width:13px;height:13px;background:#9bb8c6;"></div>
<div style="left:479px;top:322px;width:13px;height:1px;background:#d2e2ea;"></div>
<div style="left:479px;top:322px;width:1px;height:13px;background:#d2e2ea;"></div>
<div style="left:480px;top:323px;width:11px;height:1px;background:#e4eef3;"></div>
<div style="left:480px;top:323px;width:1px;height:11px;background:#e4eef3;"></div>
<div style="left:480px;top:333px;width:11px;height:1px;background:#86a0ae;"></div>
<div style="left:490px;top:323px;width:1px;height:11px;background:#86a0ae;"></div>
<div style="left:479px;top:334px;width:13px;height:1px;background:#0c1014;"></div>
<div style="left:491px;top:322px;width:1px;height:13px;background:#0c1014;"></div>
<div style="left:483px;top:327px;width:5px;height:1px;background:#000;"></div>
<div style="left:484px;top:328px;width:3px;height:1px;background:#000;"></div>
<div style="left:485px;top:329px;width:1px;height:1px;background:#000;"></div>
<div style="left:479px;top:13px;width:13px;height:6px;background:#9bb8c6;"></div>
<div style="left:479px;top:13px;width:13px;height:1px;background:#d2e2ea;"></div>
<div style="left:479px;top:13px;width:1px;height:6px;background:#d2e2ea;"></div>
<div style="left:480px;top:14px;width:11px;height:1px;background:#e4eef3;"></div>
<div style="left:480px;top:14px;width:1px;height:4px;background:#e4eef3;"></div>
<div style="left:480px;top:17px;width:11px;height:1px;background:#86a0ae;"></div>
<div style="left:490px;top:14px;width:1px;height:4px;background:#86a0ae;"></div>
<div style="left:479px;top:18px;width:13px;height:1px;background:#0c1014;"></div>
<div style="left:491px;top:13px;width:1px;height:6px;background:#0c1014;"></div>
<div style="left:0px;top:335px;width:492px;height:13px;background:#d4e2e8;"></div>
<div style="left:0px;top:335px;width:13px;height:13px;background:#9bb8c6;"></div>
<div style="left:0px;top:335px;width:13px;height:1px;background:#d2e2ea;"></div>
<div style="left:0px;top:335px;width:1px;height:13px;background:#d2e2ea;"></div>
<div style="left:1px;top:336px;width:11px;height:1px;background:#e4eef3;"></div>
<div style="left:1px;top:336px;width:1px;height:11px;background:#e4eef3;"></div>
<div style="left:1px;top:346px;width:11px;height:1px;background:#86a0ae;"></div>
<div style="left:11px;top:336px;width:1px;height:11px;background:#86a0ae;"></div>
<div style="left:0px;top:347px;width:13px;height:1px;background:#0c1014;"></div>
<div style="left:12px;top:335px;width:1px;height:13px;background:#0c1014;"></div>
<div style="left:4px;top:341px;width:1px;height:1px;background:#000;"></div>
<div style="left:5px;top:340px;width:1px;height:3px;background:#000;"></div>
<div style="left:6px;top:339px;width:1px;height:5px;background:#000;"></div>
<div style="left:13px;top:335px;width:453px;height:13px;background:#9bb8c6;"></div>
<div style="left:13px;top:335px;width:453px;height:1px;background:#d2e2ea;"></div>
<div style="left:13px;top:335px;width:1px;height:13px;background:#d2e2ea;"></div>
<div style="left:14px;top:336px;width:451px;height:1px;background:#e4eef3;"></div>
<div style="left:14px;top:336px;width:1px;height:11px;background:#e4eef3;"></div>
<div style="left:14px;top:346px;width:451px;height:1px;background:#86a0ae;"></div>
<div style="left:464px;top:336px;width:1px;height:11px;background:#86a0ae;"></div>
<div style="left:13px;top:347px;width:453px;height:1px;background:#0c1014;"></div>
<div style="left:465px;top:335px;width:1px;height:13px;background:#0c1014;"></div>
<div style="left:466px;top:335px;width:13px;height:13px;background:#9bb8c6;"></div>
<div style="left:466px;top:335px;width:13px;height:1px;background:#d2e2ea;"></div>
<div style="left:466px;top:335px;width:1px;height:13px;background:#d2e2ea;"></div>
<div style="left:467px;top:336px;width:11px;height:1px;background:#e4eef3;"></div>
<div style="left:467px;top:336px;width:1px;height:11px;background:#e4eef3;"></div>
<div style="left:467px;top:346px;width:11px;height:1px;background:#86a0ae;"></div>
<div style="left:477px;top:336px;width:1px;height:11px;background:#86a0ae;"></div>
<div style="left:466px;top:347px;width:13px;height:1px;background:#0c1014;"></div>
<div style="left:478px;top:335px;width:1px;height:13px;background:#0c1014;"></div>
<div style="left:474px;top:341px;width:1px;height:1px;background:#000;"></div>
<div style="left:473px;top:340px;width:1px;height:3px;background:#000;"></div>
<div style="left:472px;top:339px;width:1px;height:5px;background:#000;"></div>
<div style="left:479px;top:335px;width:13px;height:13px;background:#9bb8c6;"></div>
</div>
<div style="left:22px;top:22px;width:500px;height:375px;background:#9bb8c6;"></div>
<div style="left:22px;top:22px;width:500px;height:1px;background:#cfe0e8;"></div>
<div style="left:22px;top:22px;width:1px;height:375px;background:#cfe0e8;"></div>
<div style="left:23px;top:23px;width:498px;height:1px;background:#c6d8e0;"></div>
<div style="left:23px;top:23px;width:1px;height:373px;background:#c6d8e0;"></div>
<div style="left:23px;top:395px;width:498px;height:1px;background:#8aa4b2;"></div>
<div style="left:520px;top:23px;width:1px;height:373px;background:#8aa4b2;"></div>
<div style="left:22px;top:396px;width:500px;height:1px;background:#0c1014;"></div>
<div style="left:521px;top:22px;width:1px;height:375px;background:#0c1014;"></div>
<div style="left:26px;top:26px;width:492px;height:18px;background:linear-gradient(to right,#808080,#aac4cc);"></div>
<svg style="position:absolute;left:28px;top:29px" width="16" height="13" viewBox="0 0 16 13" shape-rendering="crispEdges">
<rect x="1" y="2" width="6" height="4" fill="#c07080" opacity="0.4"/>
<rect x="1" y="6" width="6" height="5" fill="#4050c0" opacity="0.5"/>
<g fill="#000">
<rect x="0" y="1" width="1" height="1"/><rect x="1" y="2" width="1" height="1"/><rect x="0" y="5" width="1" height="1"/><rect x="1" y="6" width="1" height="1"/><rect x="0" y="9" width="1" height="1"/><rect x="1" y="10" width="1" height="1"/>
<rect x="3" y="2" width="2" height="1"/><rect x="4" y="3" width="1" height="1"/><rect x="3" y="6" width="2" height="1"/><rect x="4" y="7" width="1" height="1"/><rect x="3" y="10" width="2" height="1"/><rect x="4" y="11" width="1" height="1"/>
<rect x="6" y="2" width="1" height="1"/><rect x="6" y="6" width="1" height="1"/><rect x="6" y="8" width="1" height="1"/><rect x="6" y="10" width="1" height="1"/>
</g>
<path d="M8 1h2v-1h4v1h1v11h-1v-1h-4v1h-2z" fill="#000"/>
<rect x="9" y="1" width="3" height="4" fill="#7a3444"/>
<rect x="12" y="2" width="2" height="4" fill="#78c880"/>
<rect x="9" y="6" width="3" height="4" fill="#222a70"/>
<rect x="12" y="6" width="2" height="3" fill="#f4ecb0"/>
</svg>
<div style="left:46px;top:29px;font:bold 12px/13px 'Liberation Sans', sans-serif;color:#c4c4c4;letter-spacing:0.35px;white-space:pre;">C:\Program Files\jeux\NWN\NWN\tlk\kosigan.tlk</div>
<div style="left:466px;top:28px;width:16px;height:14px;background:#a6c0cc;"></div>
<div style="left:466px;top:28px;width:16px;height:1px;background:#d2e2ea;"></div>
<div style="left:466px;top:28px;width:1px;height:14px;background:#d2e2ea;"></div>
<div style="left:467px;top:29px;width:14px;height:1px;background:#e4eef3;"></div>
<div style="left:467px;top:29px;width:1px;height:12px;background:#e4eef3;"></div>
<div style="left:467px;top:40px;width:14px;height:1px;background:#86a0ae;"></div>
<div style="left:480px;top:29px;width:1px;height:12px;background:#86a0ae;"></div>
<div style="left:466px;top:41px;width:16px;height:1px;background:#0c1014;"></div>
<div style="left:481px;top:28px;width:1px;height:14px;background:#0c1014;"></div>
<div style="left:470px;top:37px;width:6px;height:2px;background:#000;"></div>
<div style="left:482px;top:28px;width:16px;height:14px;background:#a6c0cc;"></div>
<div style="left:482px;top:28px;width:16px;height:1px;background:#d2e2ea;"></div>
<div style="left:482px;top:28px;width:1px;height:14px;background:#d2e2ea;"></div>
<div style="left:483px;top:29px;width:14px;height:1px;background:#e4eef3;"></div>
<div style="left:483px;top:29px;width:1px;height:12px;background:#e4eef3;"></div>
<div style="left:483px;top:40px;width:14px;height:1px;background:#86a0ae;"></div>
<div style="left:496px;top:29px;width:1px;height:12px;background:#86a0ae;"></div>
<div style="left:482px;top:41px;width:16px;height:1px;background:#0c1014;"></div>
<div style="left:497px;top:28px;width:1px;height:14px;background:#0c1014;"></div>
<div style="left:485px;top:30px;width:9px;height:9px;border:1px solid #000;border-top-width:2px;box-sizing:border-box;"></div>
<div style="left:500px;top:28px;width:16px;height:14px;background:#a6c0cc;"></div>
<div style="left:500px;top:28px;width:16px;height:1px;background:#d2e2ea;"></div>
<div style="left:500px;top:28px;width:1px;height:14px;background:#d2e2ea;"></div>
<div style="left:501px;top:29px;width:14px;height:1px;background:#e4eef3;"></div>
<div style="left:501px;top:29px;width:1px;height:12px;background:#e4eef3;"></div>
<div style="left:501px;top:40px;width:14px;height:1px;background:#86a0ae;"></div>
<div style="left:514px;top:29px;width:1px;height:12px;background:#86a0ae;"></div>
<div style="left:500px;top:41px;width:16px;height:1px;background:#0c1014;"></div>
<div style="left:515px;top:28px;width:1px;height:14px;background:#0c1014;"></div>
<svg style="position:absolute;left:500px;top:28px" width="16" height="14" viewBox="0 0 16 14"><path d="M4.5 3.5L11.5 10.5M11.5 3.5L4.5 10.5" stroke="#000" stroke-width="1.6" fill="none"/></svg>
<div style="left:26px;top:45px;width:492px;height:348px;overflow:hidden;background:#fff">
<div style="left:0px;top:0px;width:479px;height:335px;background:#fff;"></div>
<div style="left:0px;top:0px;width:479px;height:32px;background:#9bb8c6;"></div>
<div style="left:0px;top:0px;width:1px;height:335px;background:#0c1014;"></div>
<div style="left:1px;top:1px;width:59px;height:31px;background:#9bb8c6;"></div>
<div style="left:1px;top:1px;width:58px;height:1px;background:#f2f8fb;"></div>
<div style="left:1px;top:1px;width:1px;height:30px;background:#f2f8fb;"></div>
<div style="left:1px;top:31px;width:59px;height:1px;background:#0c1014;"></div>
<div style="left:59px;top:1px;width:1px;height:31px;background:#0c1014;"></div>
<div style="left:60px;top:1px;width:221px;height:31px;background:#9bb8c6;"></div>
<div style="left:60px;top:1px;width:220px;height:1px;background:#f2f8fb;"></div>
<div style="left:60px;top:1px;width:1px;height:30px;background:#f2f8fb;"></div>
<div style="left:60px;top:31px;width:221px;height:1px;background:#0c1014;"></div>
<div style="left:280px;top:1px;width:1px;height:31px;background:#0c1014;"></div>
<div style="left:60.6px;top:10px;font:bold 11px/13px 'Liberation Sans', sans-serif;color:#000;letter-spacing:1.2px;white-space:pre;width:221px;text-align:center;">Text</div>
<div style="left:281px;top:1px;width:110px;height:31px;background:#9bb8c6;"></div>
<div style="left:281px;top:1px;width:109px;height:1px;background:#f2f8fb;"></div>
<div style="left:281px;top:1px;width:1px;height:30px;background:#f2f8fb;"></div>
<div style="left:281px;top:31px;width:110px;height:1px;background:#0c1014;"></div>
<div style="left:390px;top:1px;width:1px;height:31px;background:#0c1014;"></div>
<div style="left:281.25px;top:4px;font:bold 11px/13px 'Liberation Sans', sans-serif;color:#000;letter-spacing:0.5px;white-space:pre;width:110px;text-align:center;">Sound</div>
<div style="left:391px;top:1px;width:80px;height:31px;background:#9bb8c6;"></div>
<div style="left:391px;top:1px;width:79px;height:1px;background:#f2f8fb;"></div>
<div style="left:391px;top:1px;width:1px;height:30px;background:#f2f8fb;"></div>
<div style="left:391px;top:31px;width:80px;height:1px;background:#0c1014;"></div>
<div style="left:470px;top:1px;width:1px;height:31px;background:#0c1014;"></div>
<div style="left:391.25px;top:4px;font:bold 11px/13px 'Liberation Sans', sans-serif;color:#000;letter-spacing:0.5px;white-space:pre;width:80px;text-align:center;">Sound</div>
<div style="left:0px;top:0px;width:471px;height:1px;background:#0c1014;"></div>
<div style="left:1px;top:32px;width:59px;height:17px;background:#9bb8c6;"></div>
<div style="left:1px;top:32px;width:58px;height:1px;background:#f2f8fb;"></div>
<div style="left:1px;top:32px;width:1px;height:16px;background:#f2f8fb;"></div>
<div style="left:1px;top:48px;width:59px;height:1px;background:#0c1014;"></div>
<div style="left:59px;top:32px;width:1px;height:17px;background:#0c1014;"></div>
<div style="left:0px;top:35px;font:bold 11px/13px 'Liberation Sans', sans-serif;color:#000;letter-spacing:0px;white-space:pre;width:60px;text-align:center;">0</div>
<div style="left:60px;top:48px;width:221px;height:1px;background:#b6b6b6;"></div>
<div style="left:280px;top:32px;width:1px;height:17px;background:#b6b6b6;"></div>
<div style="left:281px;top:48px;width:110px;height:1px;background:#b6b6b6;"></div>
<div style="left:390px;top:32px;width:1px;height:17px;background:#b6b6b6;"></div>
<div style="left:391px;top:48px;width:80px;height:1px;background:#b6b6b6;"></div>
<div style="left:470px;top:32px;width:1px;height:17px;background:#b6b6b6;"></div>
<div style="left:1px;top:49px;width:59px;height:17px;background:#9bb8c6;"></div>
<div style="left:1px;top:49px;width:58px;height:1px;background:#f2f8fb;"></div>
<div style="left:1px;top:49px;width:1px;height:16px;background:#f2f8fb;"></div>
<div style="left:1px;top:65px;width:59px;height:1px;background:#0c1014;"></div>
<div style="left:59px;top:49px;width:1px;height:17px;background:#0c1014;"></div>
<div style="left:0px;top:52px;font:bold 11px/13px 'Liberation Sans', sans-serif;color:#000;letter-spacing:0px;white-space:pre;width:60px;text-align:center;">1</div>
<div style="left:60px;top:65px;width:221px;height:1px;background:#b6b6b6;"></div>
<div style="left:280px;top:49px;width:1px;height:17px;background:#b6b6b6;"></div>
<div style="left:281px;top:65px;width:110px;height:1px;background:#b6b6b6;"></div>
<div style="left:390px;top:49px;width:1px;height:17px;background:#b6b6b6;"></div>
<div style="left:391px;top:65px;width:80px;height:1px;background:#b6b6b6;"></div>
<div style="left:470px;top:49px;width:1px;height:17px;background:#b6b6b6;"></div>
<div style="left:1px;top:66px;width:59px;height:17px;background:#9bb8c6;"></div>
<div style="left:1px;top:66px;width:58px;height:1px;background:#f2f8fb;"></div>
<div style="left:1px;top:66px;width:1px;height:16px;background:#f2f8fb;"></div>
<div style="left:1px;top:82px;width:59px;height:1px;background:#0c1014;"></div>
<div style="left:59px;top:66px;width:1px;height:17px;background:#0c1014;"></div>
<div style="left:0px;top:69px;font:bold 11px/13px 'Liberation Sans', sans-serif;color:#000;letter-spacing:0px;white-space:pre;width:60px;text-align:center;">2</div>
<div style="left:60px;top:82px;width:221px;height:1px;background:#b6b6b6;"></div>
<div style="left:280px;top:66px;width:1px;height:17px;background:#b6b6b6;"></div>
<div style="left:281px;top:82px;width:110px;height:1px;background:#b6b6b6;"></div>
<div style="left:390px;top:66px;width:1px;height:17px;background:#b6b6b6;"></div>
<div style="left:391px;top:82px;width:80px;height:1px;background:#b6b6b6;"></div>
<div style="left:470px;top:66px;width:1px;height:17px;background:#b6b6b6;"></div>
<div style="left:1px;top:83px;width:59px;height:17px;background:#9bb8c6;"></div>
<div style="left:1px;top:83px;width:58px;height:1px;background:#f2f8fb;"></div>
<div style="left:1px;top:83px;width:1px;height:16px;background:#f2f8fb;"></div>
<div style="left:1px;top:99px;width:59px;height:1px;background:#0c1014;"></div>
<div style="left:59px;top:83px;width:1px;height:17px;background:#0c1014;"></div>
<div style="left:0px;top:86px;font:bold 11px/13px 'Liberation Sans', sans-serif;color:#000;letter-spacing:0px;white-space:pre;width:60px;text-align:center;">3</div>
<div style="left:60px;top:99px;width:221px;height:1px;background:#b6b6b6;"></div>
<div style="left:280px;top:83px;width:1px;height:17px;background:#b6b6b6;"></div>
<div style="left:281px;top:99px;width:110px;height:1px;background:#b6b6b6;"></div>
<div style="left:390px;top:83px;width:1px;height:17px;background:#b6b6b6;"></div>
<div style="left:391px;top:99px;width:80px;height:1px;background:#b6b6b6;"></div>
<div style="left:470px;top:83px;width:1px;height:17px;background:#b6b6b6;"></div>
<div style="left:1px;top:100px;width:59px;height:17px;background:#9bb8c6;"></div>
<div style="left:1px;top:100px;width:58px;height:1px;background:#f2f8fb;"></div>
<div style="left:1px;top:100px;width:1px;height:16px;background:#f2f8fb;"></div>
<div style="left:1px;top:116px;width:59px;height:1px;background:#0c1014;"></div>
<div style="left:59px;top:100px;width:1px;height:17px;background:#0c1014;"></div>
<div style="left:0px;top:103px;font:bold 11px/13px 'Liberation Sans', sans-serif;color:#000;letter-spacing:0px;white-space:pre;width:60px;text-align:center;">4</div>
<div style="left:60px;top:116px;width:221px;height:1px;background:#b6b6b6;"></div>
<div style="left:280px;top:100px;width:1px;height:17px;background:#b6b6b6;"></div>
<div style="left:281px;top:116px;width:110px;height:1px;background:#b6b6b6;"></div>
<div style="left:390px;top:100px;width:1px;height:17px;background:#b6b6b6;"></div>
<div style="left:391px;top:116px;width:80px;height:1px;background:#b6b6b6;"></div>
<div style="left:470px;top:100px;width:1px;height:17px;background:#b6b6b6;"></div>
<div style="left:1px;top:117px;width:59px;height:17px;background:#9bb8c6;"></div>
<div style="left:1px;top:117px;width:58px;height:1px;background:#f2f8fb;"></div>
<div style="left:1px;top:117px;width:1px;height:16px;background:#f2f8fb;"></div>
<div style="left:1px;top:133px;width:59px;height:1px;background:#0c1014;"></div>
<div style="left:59px;top:117px;width:1px;height:17px;background:#0c1014;"></div>
<div style="left:0px;top:120px;font:bold 11px/13px 'Liberation Sans', sans-serif;color:#000;letter-spacing:0px;white-space:pre;width:60px;text-align:center;">5</div>
<div style="left:60px;top:133px;width:221px;height:1px;background:#b6b6b6;"></div>
<div style="left:280px;top:117px;width:1px;height:17px;background:#b6b6b6;"></div>
<div style="left:281px;top:133px;width:110px;height:1px;background:#b6b6b6;"></div>
<div style="left:390px;top:117px;width:1px;height:17px;background:#b6b6b6;"></div>
<div style="left:391px;top:133px;width:80px;height:1px;background:#b6b6b6;"></div>
<div style="left:470px;top:117px;width:1px;height:17px;background:#b6b6b6;"></div>
<div style="left:1px;top:134px;width:59px;height:17px;background:#9bb8c6;"></div>
<div style="left:1px;top:134px;width:58px;height:1px;background:#f2f8fb;"></div>
<div style="left:1px;top:134px;width:1px;height:16px;background:#f2f8fb;"></div>
<div style="left:1px;top:150px;width:59px;height:1px;background:#0c1014;"></div>
<div style="left:59px;top:134px;width:1px;height:17px;background:#0c1014;"></div>
<div style="left:0px;top:137px;font:bold 11px/13px 'Liberation Sans', sans-serif;color:#000;letter-spacing:0px;white-space:pre;width:60px;text-align:center;">6</div>
<div style="left:60px;top:150px;width:221px;height:1px;background:#b6b6b6;"></div>
<div style="left:280px;top:134px;width:1px;height:17px;background:#b6b6b6;"></div>
<div style="left:281px;top:150px;width:110px;height:1px;background:#b6b6b6;"></div>
<div style="left:390px;top:134px;width:1px;height:17px;background:#b6b6b6;"></div>
<div style="left:391px;top:150px;width:80px;height:1px;background:#b6b6b6;"></div>
<div style="left:470px;top:134px;width:1px;height:17px;background:#b6b6b6;"></div>
<div style="left:1px;top:151px;width:59px;height:17px;background:#9bb8c6;"></div>
<div style="left:1px;top:151px;width:58px;height:1px;background:#f2f8fb;"></div>
<div style="left:1px;top:151px;width:1px;height:16px;background:#f2f8fb;"></div>
<div style="left:1px;top:167px;width:59px;height:1px;background:#0c1014;"></div>
<div style="left:59px;top:151px;width:1px;height:17px;background:#0c1014;"></div>
<div style="left:0px;top:154px;font:bold 11px/13px 'Liberation Sans', sans-serif;color:#000;letter-spacing:0px;white-space:pre;width:60px;text-align:center;">7</div>
<div style="left:60px;top:167px;width:221px;height:1px;background:#b6b6b6;"></div>
<div style="left:280px;top:151px;width:1px;height:17px;background:#b6b6b6;"></div>
<div style="left:281px;top:167px;width:110px;height:1px;background:#b6b6b6;"></div>
<div style="left:390px;top:151px;width:1px;height:17px;background:#b6b6b6;"></div>
<div style="left:391px;top:167px;width:80px;height:1px;background:#b6b6b6;"></div>
<div style="left:470px;top:151px;width:1px;height:17px;background:#b6b6b6;"></div>
<div style="left:1px;top:168px;width:59px;height:17px;background:#9bb8c6;"></div>
<div style="left:1px;top:168px;width:58px;height:1px;background:#f2f8fb;"></div>
<div style="left:1px;top:168px;width:1px;height:16px;background:#f2f8fb;"></div>
<div style="left:1px;top:184px;width:59px;height:1px;background:#0c1014;"></div>
<div style="left:59px;top:168px;width:1px;height:17px;background:#0c1014;"></div>
<div style="left:0px;top:171px;font:bold 11px/13px 'Liberation Sans', sans-serif;color:#000;letter-spacing:0px;white-space:pre;width:60px;text-align:center;">8</div>
<div style="left:60px;top:184px;width:221px;height:1px;background:#b6b6b6;"></div>
<div style="left:280px;top:168px;width:1px;height:17px;background:#b6b6b6;"></div>
<div style="left:281px;top:184px;width:110px;height:1px;background:#b6b6b6;"></div>
<div style="left:390px;top:168px;width:1px;height:17px;background:#b6b6b6;"></div>
<div style="left:391px;top:184px;width:80px;height:1px;background:#b6b6b6;"></div>
<div style="left:470px;top:168px;width:1px;height:17px;background:#b6b6b6;"></div>
<div style="left:1px;top:185px;width:59px;height:17px;background:#9bb8c6;"></div>
<div style="left:1px;top:185px;width:58px;height:1px;background:#f2f8fb;"></div>
<div style="left:1px;top:185px;width:1px;height:16px;background:#f2f8fb;"></div>
<div style="left:1px;top:201px;width:59px;height:1px;background:#0c1014;"></div>
<div style="left:59px;top:185px;width:1px;height:17px;background:#0c1014;"></div>
<div style="left:0px;top:188px;font:bold 11px/13px 'Liberation Sans', sans-serif;color:#000;letter-spacing:0px;white-space:pre;width:60px;text-align:center;">9</div>
<div style="left:60px;top:201px;width:221px;height:1px;background:#b6b6b6;"></div>
<div style="left:280px;top:185px;width:1px;height:17px;background:#b6b6b6;"></div>
<div style="left:281px;top:201px;width:110px;height:1px;background:#b6b6b6;"></div>
<div style="left:390px;top:185px;width:1px;height:17px;background:#b6b6b6;"></div>
<div style="left:391px;top:201px;width:80px;height:1px;background:#b6b6b6;"></div>
<div style="left:470px;top:185px;width:1px;height:17px;background:#b6b6b6;"></div>
<div style="left:1px;top:202px;width:59px;height:17px;background:#9bb8c6;"></div>
<div style="left:1px;top:202px;width:58px;height:1px;background:#f2f8fb;"></div>
<div style="left:1px;top:202px;width:1px;height:16px;background:#f2f8fb;"></div>
<div style="left:1px;top:218px;width:59px;height:1px;background:#0c1014;"></div>
<div style="left:59px;top:202px;width:1px;height:17px;background:#0c1014;"></div>
<div style="left:0.25px;top:205px;font:bold 11px/13px 'Liberation Sans', sans-serif;color:#000;letter-spacing:0.5px;white-space:pre;width:60px;text-align:center;">10</div>
<div style="left:60px;top:218px;width:221px;height:1px;background:#b6b6b6;"></div>
<div style="left:280px;top:202px;width:1px;height:17px;background:#b6b6b6;"></div>
<div style="left:281px;top:218px;width:110px;height:1px;background:#b6b6b6;"></div>
<div style="left:390px;top:202px;width:1px;height:17px;background:#b6b6b6;"></div>
<div style="left:391px;top:218px;width:80px;height:1px;background:#b6b6b6;"></div>
<div style="left:470px;top:202px;width:1px;height:17px;background:#b6b6b6;"></div>
<div style="left:1px;top:219px;width:59px;height:17px;background:#9bb8c6;"></div>
<div style="left:1px;top:219px;width:58px;height:1px;background:#f2f8fb;"></div>
<div style="left:1px;top:219px;width:1px;height:16px;background:#f2f8fb;"></div>
<div style="left:1px;top:235px;width:59px;height:1px;background:#0c1014;"></div>
<div style="left:59px;top:219px;width:1px;height:17px;background:#0c1014;"></div>
<div style="left:0.25px;top:222px;font:bold 11px/13px 'Liberation Sans', sans-serif;color:#000;letter-spacing:0.5px;white-space:pre;width:60px;text-align:center;">11</div>
<div style="left:60px;top:235px;width:221px;height:1px;background:#b6b6b6;"></div>
<div style="left:280px;top:219px;width:1px;height:17px;background:#b6b6b6;"></div>
<div style="left:281px;top:235px;width:110px;height:1px;background:#b6b6b6;"></div>
<div style="left:390px;top:219px;width:1px;height:17px;background:#b6b6b6;"></div>
<div style="left:391px;top:235px;width:80px;height:1px;background:#b6b6b6;"></div>
<div style="left:470px;top:219px;width:1px;height:17px;background:#b6b6b6;"></div>
<div style="left:1px;top:236px;width:59px;height:17px;background:#9bb8c6;"></div>
<div style="left:1px;top:236px;width:58px;height:1px;background:#f2f8fb;"></div>
<div style="left:1px;top:236px;width:1px;height:16px;background:#f2f8fb;"></div>
<div style="left:1px;top:252px;width:59px;height:1px;background:#0c1014;"></div>
<div style="left:59px;top:236px;width:1px;height:17px;background:#0c1014;"></div>
<div style="left:0.25px;top:239px;font:bold 11px/13px 'Liberation Sans', sans-serif;color:#000;letter-spacing:0.5px;white-space:pre;width:60px;text-align:center;">12</div>
<div style="left:60px;top:252px;width:221px;height:1px;background:#b6b6b6;"></div>
<div style="left:280px;top:236px;width:1px;height:17px;background:#b6b6b6;"></div>
<div style="left:281px;top:252px;width:110px;height:1px;background:#b6b6b6;"></div>
<div style="left:390px;top:236px;width:1px;height:17px;background:#b6b6b6;"></div>
<div style="left:391px;top:252px;width:80px;height:1px;background:#b6b6b6;"></div>
<div style="left:470px;top:236px;width:1px;height:17px;background:#b6b6b6;"></div>
<div style="left:1px;top:253px;width:59px;height:17px;background:#9bb8c6;"></div>
<div style="left:1px;top:253px;width:58px;height:1px;background:#f2f8fb;"></div>
<div style="left:1px;top:253px;width:1px;height:16px;background:#f2f8fb;"></div>
<div style="left:1px;top:269px;width:59px;height:1px;background:#0c1014;"></div>
<div style="left:59px;top:253px;width:1px;height:17px;background:#0c1014;"></div>
<div style="left:0.25px;top:256px;font:bold 11px/13px 'Liberation Sans', sans-serif;color:#000;letter-spacing:0.5px;white-space:pre;width:60px;text-align:center;">13</div>
<div style="left:60px;top:269px;width:221px;height:1px;background:#b6b6b6;"></div>
<div style="left:280px;top:253px;width:1px;height:17px;background:#b6b6b6;"></div>
<div style="left:281px;top:269px;width:110px;height:1px;background:#b6b6b6;"></div>
<div style="left:390px;top:253px;width:1px;height:17px;background:#b6b6b6;"></div>
<div style="left:391px;top:269px;width:80px;height:1px;background:#b6b6b6;"></div>
<div style="left:470px;top:253px;width:1px;height:17px;background:#b6b6b6;"></div>
<div style="left:1px;top:270px;width:59px;height:17px;background:#9bb8c6;"></div>
<div style="left:1px;top:270px;width:58px;height:1px;background:#f2f8fb;"></div>
<div style="left:1px;top:270px;width:1px;height:16px;background:#f2f8fb;"></div>
<div style="left:1px;top:286px;width:59px;height:1px;background:#0c1014;"></div>
<div style="left:59px;top:270px;width:1px;height:17px;background:#0c1014;"></div>
<div style="left:0.25px;top:273px;font:bold 11px/13px 'Liberation Sans', sans-serif;color:#000;letter-spacing:0.5px;white-space:pre;width:60px;text-align:center;">14</div>
<div style="left:60px;top:286px;width:221px;height:1px;background:#b6b6b6;"></div>
<div style="left:280px;top:270px;width:1px;height:17px;background:#b6b6b6;"></div>
<div style="left:281px;top:286px;width:110px;height:1px;background:#b6b6b6;"></div>
<div style="left:390px;top:270px;width:1px;height:17px;background:#b6b6b6;"></div>
<div style="left:391px;top:286px;width:80px;height:1px;background:#b6b6b6;"></div>
<div style="left:470px;top:270px;width:1px;height:17px;background:#b6b6b6;"></div>
<div style="left:1px;top:287px;width:59px;height:17px;background:#9bb8c6;"></div>
<div style="left:1px;top:287px;width:58px;height:1px;background:#f2f8fb;"></div>
<div style="left:1px;top:287px;width:1px;height:16px;background:#f2f8fb;"></div>
<div style="left:1px;top:303px;width:59px;height:1px;background:#0c1014;"></div>
<div style="left:59px;top:287px;width:1px;height:17px;background:#0c1014;"></div>
<div style="left:0.25px;top:290px;font:bold 11px/13px 'Liberation Sans', sans-serif;color:#000;letter-spacing:0.5px;white-space:pre;width:60px;text-align:center;">15</div>
<div style="left:60px;top:303px;width:221px;height:1px;background:#b6b6b6;"></div>
<div style="left:280px;top:287px;width:1px;height:17px;background:#b6b6b6;"></div>
<div style="left:281px;top:303px;width:110px;height:1px;background:#b6b6b6;"></div>
<div style="left:390px;top:287px;width:1px;height:17px;background:#b6b6b6;"></div>
<div style="left:391px;top:303px;width:80px;height:1px;background:#b6b6b6;"></div>
<div style="left:470px;top:287px;width:1px;height:17px;background:#b6b6b6;"></div>
<div style="left:1px;top:304px;width:59px;height:17px;background:#9bb8c6;"></div>
<div style="left:1px;top:304px;width:58px;height:1px;background:#f2f8fb;"></div>
<div style="left:1px;top:304px;width:1px;height:16px;background:#f2f8fb;"></div>
<div style="left:1px;top:320px;width:59px;height:1px;background:#0c1014;"></div>
<div style="left:59px;top:304px;width:1px;height:17px;background:#0c1014;"></div>
<div style="left:0.25px;top:307px;font:bold 11px/13px 'Liberation Sans', sans-serif;color:#000;letter-spacing:0.5px;white-space:pre;width:60px;text-align:center;">16</div>
<div style="left:60px;top:320px;width:221px;height:1px;background:#b6b6b6;"></div>
<div style="left:280px;top:304px;width:1px;height:17px;background:#b6b6b6;"></div>
<div style="left:281px;top:320px;width:110px;height:1px;background:#b6b6b6;"></div>
<div style="left:390px;top:304px;width:1px;height:17px;background:#b6b6b6;"></div>
<div style="left:391px;top:320px;width:80px;height:1px;background:#b6b6b6;"></div>
<div style="left:470px;top:304px;width:1px;height:17px;background:#b6b6b6;"></div>
<div style="left:1px;top:321px;width:59px;height:17px;background:#9bb8c6;"></div>
<div style="left:1px;top:321px;width:58px;height:1px;background:#f2f8fb;"></div>
<div style="left:1px;top:321px;width:1px;height:16px;background:#f2f8fb;"></div>
<div style="left:1px;top:337px;width:59px;height:1px;background:#0c1014;"></div>
<div style="left:59px;top:321px;width:1px;height:17px;background:#0c1014;"></div>
<div style="left:0.25px;top:324px;font:bold 11px/13px 'Liberation Sans', sans-serif;color:#000;letter-spacing:0.5px;white-space:pre;width:60px;text-align:center;">17</div>
<div style="left:60px;top:337px;width:221px;height:1px;background:#b6b6b6;"></div>
<div style="left:280px;top:321px;width:1px;height:17px;background:#b6b6b6;"></div>
<div style="left:281px;top:337px;width:110px;height:1px;background:#b6b6b6;"></div>
<div style="left:390px;top:321px;width:1px;height:17px;background:#b6b6b6;"></div>
<div style="left:391px;top:337px;width:80px;height:1px;background:#b6b6b6;"></div>
<div style="left:470px;top:321px;width:1px;height:17px;background:#b6b6b6;"></div>
<div style="left:479px;top:0px;width:13px;height:335px;background:#d4e2e8;"></div>
<div style="left:479px;top:0px;width:13px;height:13px;background:#9bb8c6;"></div>
<div style="left:479px;top:0px;width:13px;height:1px;background:#d2e2ea;"></div>
<div style="left:479px;top:0px;width:1px;height:13px;background:#d2e2ea;"></div>
<div style="left:480px;top:1px;width:11px;height:1px;background:#e4eef3;"></div>
<div style="left:480px;top:1px;width:1px;height:11px;background:#e4eef3;"></div>
<div style="left:480px;top:11px;width:11px;height:1px;background:#86a0ae;"></div>
<div style="left:490px;top:1px;width:1px;height:11px;background:#86a0ae;"></div>
<div style="left:479px;top:12px;width:13px;height:1px;background:#0c1014;"></div>
<div style="left:491px;top:0px;width:1px;height:13px;background:#0c1014;"></div>
<div style="left:485px;top:5px;width:1px;height:1px;background:#000;"></div>
<div style="left:484px;top:6px;width:3px;height:1px;background:#000;"></div>
<div style="left:483px;top:7px;width:5px;height:1px;background:#000;"></div>
<div style="left:479px;top:322px;width:13px;height:13px;background:#9bb8c6;"></div>
<div style="left:479px;top:322px;width:13px;height:1px;background:#d2e2ea;"></div>
<div style="left:479px;top:322px;width:1px;height:13px;background:#d2e2ea;"></div>
<div style="left:480px;top:323px;width:11px;height:1px;background:#e4eef3;"></div>
<div style="left:480px;top:323px;width:1px;height:11px;background:#e4eef3;"></div>
<div style="left:480px;top:333px;width:11px;height:1px;background:#86a0ae;"></div>
<div style="left:490px;top:323px;width:1px;height:11px;background:#86a0ae;"></div>
<div style="left:479px;top:334px;width:13px;height:1px;background:#0c1014;"></div>
<div style="left:491px;top:322px;width:1px;height:13px;background:#0c1014;"></div>
<div style="left:483px;top:327px;width:5px;height:1px;background:#000;"></div>
<div style="left:484px;top:328px;width:3px;height:1px;background:#000;"></div>
<div style="left:485px;top:329px;width:1px;height:1px;background:#000;"></div>
<div style="left:479px;top:13px;width:13px;height:6px;background:#9bb8c6;"></div>
<div style="left:479px;top:13px;width:13px;height:1px;background:#d2e2ea;"></div>
<div style="left:479px;top:13px;width:1px;height:6px;background:#d2e2ea;"></div>
<div style="left:480px;top:14px;width:11px;height:1px;background:#e4eef3;"></div>
<div style="left:480px;top:14px;width:1px;height:4px;background:#e4eef3;"></div>
<div style="left:480px;top:17px;width:11px;height:1px;background:#86a0ae;"></div>
<div style="left:490px;top:14px;width:1px;height:4px;background:#86a0ae;"></div>
<div style="left:479px;top:18px;width:13px;height:1px;background:#0c1014;"></div>
<div style="left:491px;top:13px;width:1px;height:6px;background:#0c1014;"></div>
<div style="left:0px;top:335px;width:492px;height:13px;background:#d4e2e8;"></div>
<div style="left:0px;top:335px;width:13px;height:13px;background:#9bb8c6;"></div>
<div style="left:0px;top:335px;width:13px;height:1px;background:#d2e2ea;"></div>
<div style="left:0px;top:335px;width:1px;height:13px;background:#d2e2ea;"></div>
<div style="left:1px;top:336px;width:11px;height:1px;background:#e4eef3;"></div>
<div style="left:1px;top:336px;width:1px;height:11px;background:#e4eef3;"></div>
<div style="left:1px;top:346px;width:11px;height:1px;background:#86a0ae;"></div>
<div style="left:11px;top:336px;width:1px;height:11px;background:#86a0ae;"></div>
<div style="left:0px;top:347px;width:13px;height:1px;background:#0c1014;"></div>
<div style="left:12px;top:335px;width:1px;height:13px;background:#0c1014;"></div>
<div style="left:4px;top:341px;width:1px;height:1px;background:#000;"></div>
<div style="left:5px;top:340px;width:1px;height:3px;background:#000;"></div>
<div style="left:6px;top:339px;width:1px;height:5px;background:#000;"></div>
<div style="left:13px;top:335px;width:453px;height:13px;background:#9bb8c6;"></div>
<div style="left:13px;top:335px;width:453px;height:1px;background:#d2e2ea;"></div>
<div style="left:13px;top:335px;width:1px;height:13px;background:#d2e2ea;"></div>
<div style="left:14px;top:336px;width:451px;height:1px;background:#e4eef3;"></div>
<div style="left:14px;top:336px;width:1px;height:11px;background:#e4eef3;"></div>
<div style="left:14px;top:346px;width:451px;height:1px;background:#86a0ae;"></div>
<div style="left:464px;top:336px;width:1px;height:11px;background:#86a0ae;"></div>
<div style="left:13px;top:347px;width:453px;height:1px;background:#0c1014;"></div>
<div style="left:465px;top:335px;width:1px;height:13px;background:#0c1014;"></div>
<div style="left:466px;top:335px;width:13px;height:13px;background:#9bb8c6;"></div>
<div style="left:466px;top:335px;width:13px;height:1px;background:#d2e2ea;"></div>
<div style="left:466px;top:335px;width:1px;height:13px;background:#d2e2ea;"></div>
<div style="left:467px;top:336px;width:11px;height:1px;background:#e4eef3;"></div>
<div style="left:467px;top:336px;width:1px;height:11px;background:#e4eef3;"></div>
<div style="left:467px;top:346px;width:11px;height:1px;background:#86a0ae;"></div>
<div style="left:477px;top:336px;width:1px;height:11px;background:#86a0ae;"></div>
<div style="left:466px;top:347px;width:13px;height:1px;background:#0c1014;"></div>
<div style="left:478px;top:335px;width:1px;height:13px;background:#0c1014;"></div>
<div style="left:474px;top:341px;width:1px;height:1px;background:#000;"></div>
<div style="left:473px;top:340px;width:1px;height:3px;background:#000;"></div>
<div style="left:472px;top:339px;width:1px;height:5px;background:#000;"></div>
<div style="left:479px;top:335px;width:13px;height:13px;background:#9bb8c6;"></div>
</div>
<div style="left:44px;top:44px;width:500px;height:375px;background:#9bb8c6;"></div>
<div style="left:44px;top:44px;width:500px;height:1px;background:#cfe0e8;"></div>
<div style="left:44px;top:44px;width:1px;height:375px;background:#cfe0e8;"></div>
<div style="left:45px;top:45px;width:498px;height:1px;background:#c6d8e0;"></div>
<div style="left:45px;top:45px;width:1px;height:373px;background:#c6d8e0;"></div>
<div style="left:45px;top:417px;width:498px;height:1px;background:#8aa4b2;"></div>
<div style="left:542px;top:45px;width:1px;height:373px;background:#8aa4b2;"></div>
<div style="left:44px;top:418px;width:500px;height:1px;background:#0c1014;"></div>
<div style="left:543px;top:44px;width:1px;height:375px;background:#0c1014;"></div>
<div style="left:48px;top:48px;width:492px;height:18px;background:linear-gradient(to right,#808080,#aac4cc);"></div>
<svg style="position:absolute;left:50px;top:51px" width="16" height="13" viewBox="0 0 16 13" shape-rendering="crispEdges">
<rect x="1" y="2" width="6" height="4" fill="#c07080" opacity="0.4"/>
<rect x="1" y="6" width="6" height="5" fill="#4050c0" opacity="0.5"/>
<g fill="#000">
<rect x="0" y="1" width="1" height="1"/><rect x="1" y="2" width="1" height="1"/><rect x="0" y="5" width="1" height="1"/><rect x="1" y="6" width="1" height="1"/><rect x="0" y="9" width="1" height="1"/><rect x="1" y="10" width="1" height="1"/>
<rect x="3" y="2" width="2" height="1"/><rect x="4" y="3" width="1" height="1"/><rect x="3" y="6" width="2" height="1"/><rect x="4" y="7" width="1" height="1"/><rect x="3" y="10" width="2" height="1"/><rect x="4" y="11" width="1" height="1"/>
<rect x="6" y="2" width="1" height="1"/><rect x="6" y="6" width="1" height="1"/><rect x="6" y="8" width="1" height="1"/><rect x="6" y="10" width="1" height="1"/>
</g>
<path d="M8 1h2v-1h4v1h1v11h-1v-1h-4v1h-2z" fill="#000"/>
<rect x="9" y="1" width="3" height="4" fill="#7a3444"/>
<rect x="12" y="2" width="2" height="4" fill="#78c880"/>
<rect x="9" y="6" width="3" height="4" fill="#222a70"/>
<rect x="12" y="6" width="2" height="3" fill="#f4ecb0"/>
</svg>
<div style="left:68px;top:51px;font:bold 12px/13px 'Liberation Sans', sans-serif;color:#c4c4c4;letter-spacing:0.35px;white-space:pre;">C:\Program Files\jeux\NWN\NWN\tlk\test52.tlk</div>
<div style="left:488px;top:50px;width:16px;height:14px;background:#a6c0cc;"></div>
<div style="left:488px;top:50px;width:16px;height:1px;background:#d2e2ea;"></div>
<div style="left:488px;top:50px;width:1px;height:14px;background:#d2e2ea;"></div>
<div style="left:489px;top:51px;width:14px;height:1px;background:#e4eef3;"></div>
<div style="left:489px;top:51px;width:1px;height:12px;background:#e4eef3;"></div>
<div style="left:489px;top:62px;width:14px;height:1px;background:#86a0ae;"></div>
<div style="left:502px;top:51px;width:1px;height:12px;background:#86a0ae;"></div>
<div style="left:488px;top:63px;width:16px;height:1px;background:#0c1014;"></div>
<div style="left:503px;top:50px;width:1px;height:14px;background:#0c1014;"></div>
<div style="left:492px;top:59px;width:6px;height:2px;background:#000;"></div>
<div style="left:504px;top:50px;width:16px;height:14px;background:#a6c0cc;"></div>
<div style="left:504px;top:50px;width:16px;height:1px;background:#d2e2ea;"></div>
<div style="left:504px;top:50px;width:1px;height:14px;background:#d2e2ea;"></div>
<div style="left:505px;top:51px;width:14px;height:1px;background:#e4eef3;"></div>
<div style="left:505px;top:51px;width:1px;height:12px;background:#e4eef3;"></div>
<div style="left:505px;top:62px;width:14px;height:1px;background:#86a0ae;"></div>
<div style="left:518px;top:51px;width:1px;height:12px;background:#86a0ae;"></div>
<div style="left:504px;top:63px;width:16px;height:1px;background:#0c1014;"></div>
<div style="left:519px;top:50px;width:1px;height:14px;background:#0c1014;"></div>
<div style="left:507px;top:52px;width:9px;height:9px;border:1px solid #000;border-top-width:2px;box-sizing:border-box;"></div>
<div style="left:522px;top:50px;width:16px;height:14px;background:#a6c0cc;"></div>
<div style="left:522px;top:50px;width:16px;height:1px;background:#d2e2ea;"></div>
<div style="left:522px;top:50px;width:1px;height:14px;background:#d2e2ea;"></div>
<div style="left:523px;top:51px;width:14px;height:1px;background:#e4eef3;"></div>
<div style="left:523px;top:51px;width:1px;height:12px;background:#e4eef3;"></div>
<div style="left:523px;top:62px;width:14px;height:1px;background:#86a0ae;"></div>
<div style="left:536px;top:51px;width:1px;height:12px;background:#86a0ae;"></div>
<div style="left:522px;top:63px;width:16px;height:1px;background:#0c1014;"></div>
<div style="left:537px;top:50px;width:1px;height:14px;background:#0c1014;"></div>
<svg style="position:absolute;left:522px;top:50px" width="16" height="14" viewBox="0 0 16 14"><path d="M4.5 3.5L11.5 10.5M11.5 3.5L4.5 10.5" stroke="#000" stroke-width="1.6" fill="none"/></svg>
<div style="left:48px;top:67px;width:492px;height:348px;overflow:hidden;background:#fff">
<div style="left:0px;top:0px;width:479px;height:335px;background:#fff;"></div>
<div style="left:0px;top:0px;width:479px;height:32px;background:#9bb8c6;"></div>
<div style="left:0px;top:0px;width:1px;height:335px;background:#0c1014;"></div>
<div style="left:1px;top:1px;width:59px;height:31px;background:#9bb8c6;"></div>
<div style="left:1px;top:1px;width:58px;height:1px;background:#f2f8fb;"></div>
<div style="left:1px;top:1px;width:1px;height:30px;background:#f2f8fb;"></div>
<div style="left:1px;top:31px;width:59px;height:1px;background:#0c1014;"></div>
<div style="left:59px;top:1px;width:1px;height:31px;background:#0c1014;"></div>
<div style="left:60px;top:1px;width:221px;height:31px;background:#9bb8c6;"></div>
<div style="left:60px;top:1px;width:220px;height:1px;background:#f2f8fb;"></div>
<div style="left:60px;top:1px;width:1px;height:30px;background:#f2f8fb;"></div>
<div style="left:60px;top:31px;width:221px;height:1px;background:#0c1014;"></div>
<div style="left:280px;top:1px;width:1px;height:31px;background:#0c1014;"></div>
<div style="left:60.6px;top:10px;font:bold 11px/13px 'Liberation Sans', sans-serif;color:#000;letter-spacing:1.2px;white-space:pre;width:221px;text-align:center;">Text</div>
<div style="left:281px;top:1px;width:110px;height:31px;background:#9bb8c6;"></div>
<div style="left:281px;top:1px;width:109px;height:1px;background:#f2f8fb;"></div>
<div style="left:281px;top:1px;width:1px;height:30px;background:#f2f8fb;"></div>
<div style="left:281px;top:31px;width:110px;height:1px;background:#0c1014;"></div>
<div style="left:390px;top:1px;width:1px;height:31px;background:#0c1014;"></div>
<div style="left:281.25px;top:4px;font:bold 11px/13px 'Liberation Sans', sans-serif;color:#000;letter-spacing:0.5px;white-space:pre;width:110px;text-align:center;">Sound</div>
<div style="left:391px;top:1px;width:80px;height:31px;background:#9bb8c6;"></div>
<div style="left:391px;top:1px;width:79px;height:1px;background:#f2f8fb;"></div>
<div style="left:391px;top:1px;width:1px;height:30px;background:#f2f8fb;"></div>
<div style="left:391px;top:31px;width:80px;height:1px;background:#0c1014;"></div>
<div style="left:470px;top:1px;width:1px;height:31px;background:#0c1014;"></div>
<div style="left:391.25px;top:4px;font:bold 11px/13px 'Liberation Sans', sans-serif;color:#000;letter-spacing:0.5px;white-space:pre;width:80px;text-align:center;">Sound</div>
<div style="left:0px;top:0px;width:471px;height:1px;background:#0c1014;"></div>
<div style="left:1px;top:32px;width:59px;height:17px;background:#9bb8c6;"></div>
<div style="left:1px;top:32px;width:58px;height:1px;background:#f2f8fb;"></div>
<div style="left:1px;top:32px;width:1px;height:16px;background:#f2f8fb;"></div>
<div style="left:1px;top:48px;width:59px;height:1px;background:#0c1014;"></div>
<div style="left:59px;top:32px;width:1px;height:17px;background:#0c1014;"></div>
<div style="left:0px;top:35px;font:bold 11px/13px 'Liberation Sans', sans-serif;color:#000;letter-spacing:0px;white-space:pre;width:60px;text-align:center;">0</div>
<div style="left:60px;top:48px;width:221px;height:1px;background:#b6b6b6;"></div>
<div style="left:280px;top:32px;width:1px;height:17px;background:#b6b6b6;"></div>
<div style="left:281px;top:48px;width:110px;height:1px;background:#b6b6b6;"></div>
<div style="left:390px;top:32px;width:1px;height:17px;background:#b6b6b6;"></div>
<div style="left:391px;top:48px;width:80px;height:1px;background:#b6b6b6;"></div>
<div style="left:470px;top:32px;width:1px;height:17px;background:#b6b6b6;"></div>
<div style="left:1px;top:49px;width:59px;height:17px;background:#9bb8c6;"></div>
<div style="left:1px;top:49px;width:58px;height:1px;background:#f2f8fb;"></div>
<div style="left:1px;top:49px;width:1px;height:16px;background:#f2f8fb;"></div>
<div style="left:1px;top:65px;width:59px;height:1px;background:#0c1014;"></div>
<div style="left:59px;top:49px;width:1px;height:17px;background:#0c1014;"></div>
<div style="left:0px;top:52px;font:bold 11px/13px 'Liberation Sans', sans-serif;color:#000;letter-spacing:0px;white-space:pre;width:60px;text-align:center;">1</div>
<div style="left:60px;top:65px;width:221px;height:1px;background:#b6b6b6;"></div>
<div style="left:280px;top:49px;width:1px;height:17px;background:#b6b6b6;"></div>
<div style="left:281px;top:65px;width:110px;height:1px;background:#b6b6b6;"></div>
<div style="left:390px;top:49px;width:1px;height:17px;background:#b6b6b6;"></div>
<div style="left:391px;top:65px;width:80px;height:1px;background:#b6b6b6;"></div>
<div style="left:470px;top:49px;width:1px;height:17px;background:#b6b6b6;"></div>
<div style="left:1px;top:66px;width:59px;height:17px;background:#9bb8c6;"></div>
<div style="left:1px;top:66px;width:58px;height:1px;background:#f2f8fb;"></div>
<div style="left:1px;top:66px;width:1px;height:16px;background:#f2f8fb;"></div>
<div style="left:1px;top:82px;width:59px;height:1px;background:#0c1014;"></div>
<div style="left:59px;top:66px;width:1px;height:17px;background:#0c1014;"></div>
<div style="left:0px;top:69px;font:bold 11px/13px 'Liberation Sans', sans-serif;color:#000;letter-spacing:0px;white-space:pre;width:60px;text-align:center;">2</div>
<div style="left:60px;top:82px;width:221px;height:1px;background:#b6b6b6;"></div>
<div style="left:280px;top:66px;width:1px;height:17px;background:#b6b6b6;"></div>
<div style="left:281px;top:82px;width:110px;height:1px;background:#b6b6b6;"></div>
<div style="left:390px;top:66px;width:1px;height:17px;background:#b6b6b6;"></div>
<div style="left:391px;top:82px;width:80px;height:1px;background:#b6b6b6;"></div>
<div style="left:470px;top:66px;width:1px;height:17px;background:#b6b6b6;"></div>
<div style="left:1px;top:83px;width:59px;height:17px;background:#9bb8c6;"></div>
<div style="left:1px;top:83px;width:58px;height:1px;background:#f2f8fb;"></div>
<div style="left:1px;top:83px;width:1px;height:16px;background:#f2f8fb;"></div>
<div style="left:1px;top:99px;width:59px;height:1px;background:#0c1014;"></div>
<div style="left:59px;top:83px;width:1px;height:17px;background:#0c1014;"></div>
<div style="left:0px;top:86px;font:bold 11px/13px 'Liberation Sans', sans-serif;color:#000;letter-spacing:0px;white-space:pre;width:60px;text-align:center;">3</div>
<div style="left:60px;top:99px;width:221px;height:1px;background:#b6b6b6;"></div>
<div style="left:280px;top:83px;width:1px;height:17px;background:#b6b6b6;"></div>
<div style="left:281px;top:99px;width:110px;height:1px;background:#b6b6b6;"></div>
<div style="left:390px;top:83px;width:1px;height:17px;background:#b6b6b6;"></div>
<div style="left:391px;top:99px;width:80px;height:1px;background:#b6b6b6;"></div>
<div style="left:470px;top:83px;width:1px;height:17px;background:#b6b6b6;"></div>
<div style="left:1px;top:100px;width:59px;height:17px;background:#9bb8c6;"></div>
<div style="left:1px;top:100px;width:58px;height:1px;background:#f2f8fb;"></div>
<div style="left:1px;top:100px;width:1px;height:16px;background:#f2f8fb;"></div>
<div style="left:1px;top:116px;width:59px;height:1px;background:#0c1014;"></div>
<div style="left:59px;top:100px;width:1px;height:17px;background:#0c1014;"></div>
<div style="left:0px;top:103px;font:bold 11px/13px 'Liberation Sans', sans-serif;color:#000;letter-spacing:0px;white-space:pre;width:60px;text-align:center;">4</div>
<div style="left:60px;top:116px;width:221px;height:1px;background:#b6b6b6;"></div>
<div style="left:280px;top:100px;width:1px;height:17px;background:#b6b6b6;"></div>
<div style="left:281px;top:116px;width:110px;height:1px;background:#b6b6b6;"></div>
<div style="left:390px;top:100px;width:1px;height:17px;background:#b6b6b6;"></div>
<div style="left:391px;top:116px;width:80px;height:1px;background:#b6b6b6;"></div>
<div style="left:470px;top:100px;width:1px;height:17px;background:#b6b6b6;"></div>
<div style="left:1px;top:117px;width:59px;height:17px;background:#9bb8c6;"></div>
<div style="left:1px;top:117px;width:58px;height:1px;background:#f2f8fb;"></div>
<div style="left:1px;top:117px;width:1px;height:16px;background:#f2f8fb;"></div>
<div style="left:1px;top:133px;width:59px;height:1px;background:#0c1014;"></div>
<div style="left:59px;top:117px;width:1px;height:17px;background:#0c1014;"></div>
<div style="left:0px;top:120px;font:bold 11px/13px 'Liberation Sans', sans-serif;color:#000;letter-spacing:0px;white-space:pre;width:60px;text-align:center;">5</div>
<div style="left:60px;top:133px;width:221px;height:1px;background:#b6b6b6;"></div>
<div style="left:280px;top:117px;width:1px;height:17px;background:#b6b6b6;"></div>
<div style="left:281px;top:133px;width:110px;height:1px;background:#b6b6b6;"></div>
<div style="left:390px;top:117px;width:1px;height:17px;background:#b6b6b6;"></div>
<div style="left:391px;top:133px;width:80px;height:1px;background:#b6b6b6;"></div>
<div style="left:470px;top:117px;width:1px;height:17px;background:#b6b6b6;"></div>
<div style="left:1px;top:134px;width:59px;height:17px;background:#9bb8c6;"></div>
<div style="left:1px;top:134px;width:58px;height:1px;background:#f2f8fb;"></div>
<div style="left:1px;top:134px;width:1px;height:16px;background:#f2f8fb;"></div>
<div style="left:1px;top:150px;width:59px;height:1px;background:#0c1014;"></div>
<div style="left:59px;top:134px;width:1px;height:17px;background:#0c1014;"></div>
<div style="left:0px;top:137px;font:bold 11px/13px 'Liberation Sans', sans-serif;color:#000;letter-spacing:0px;white-space:pre;width:60px;text-align:center;">6</div>
<div style="left:60px;top:150px;width:221px;height:1px;background:#b6b6b6;"></div>
<div style="left:280px;top:134px;width:1px;height:17px;background:#b6b6b6;"></div>
<div style="left:281px;top:150px;width:110px;height:1px;background:#b6b6b6;"></div>
<div style="left:390px;top:134px;width:1px;height:17px;background:#b6b6b6;"></div>
<div style="left:391px;top:150px;width:80px;height:1px;background:#b6b6b6;"></div>
<div style="left:470px;top:134px;width:1px;height:17px;background:#b6b6b6;"></div>
<div style="left:1px;top:151px;width:59px;height:17px;background:#9bb8c6;"></div>
<div style="left:1px;top:151px;width:58px;height:1px;background:#f2f8fb;"></div>
<div style="left:1px;top:151px;width:1px;height:16px;background:#f2f8fb;"></div>
<div style="left:1px;top:167px;width:59px;height:1px;background:#0c1014;"></div>
<div style="left:59px;top:151px;width:1px;height:17px;background:#0c1014;"></div>
<div style="left:0px;top:154px;font:bold 11px/13px 'Liberation Sans', sans-serif;color:#000;letter-spacing:0px;white-space:pre;width:60px;text-align:center;">7</div>
<div style="left:60px;top:167px;width:221px;height:1px;background:#b6b6b6;"></div>
<div style="left:280px;top:151px;width:1px;height:17px;background:#b6b6b6;"></div>
<div style="left:281px;top:167px;width:110px;height:1px;background:#b6b6b6;"></div>
<div style="left:390px;top:151px;width:1px;height:17px;background:#b6b6b6;"></div>
<div style="left:391px;top:167px;width:80px;height:1px;background:#b6b6b6;"></div>
<div style="left:470px;top:151px;width:1px;height:17px;background:#b6b6b6;"></div>
<div style="left:1px;top:168px;width:59px;height:17px;background:#9bb8c6;"></div>
<div style="left:1px;top:168px;width:58px;height:1px;background:#f2f8fb;"></div>
<div style="left:1px;top:168px;width:1px;height:16px;background:#f2f8fb;"></div>
<div style="left:1px;top:184px;width:59px;height:1px;background:#0c1014;"></div>
<div style="left:59px;top:168px;width:1px;height:17px;background:#0c1014;"></div>
<div style="left:0px;top:171px;font:bold 11px/13px 'Liberation Sans', sans-serif;color:#000;letter-spacing:0px;white-space:pre;width:60px;text-align:center;">8</div>
<div style="left:60px;top:184px;width:221px;height:1px;background:#b6b6b6;"></div>
<div style="left:280px;top:168px;width:1px;height:17px;background:#b6b6b6;"></div>
<div style="left:281px;top:184px;width:110px;height:1px;background:#b6b6b6;"></div>
<div style="left:390px;top:168px;width:1px;height:17px;background:#b6b6b6;"></div>
<div style="left:391px;top:184px;width:80px;height:1px;background:#b6b6b6;"></div>
<div style="left:470px;top:168px;width:1px;height:17px;background:#b6b6b6;"></div>
<div style="left:1px;top:185px;width:59px;height:17px;background:#9bb8c6;"></div>
<div style="left:1px;top:185px;width:58px;height:1px;background:#f2f8fb;"></div>
<div style="left:1px;top:185px;width:1px;height:16px;background:#f2f8fb;"></div>
<div style="left:1px;top:201px;width:59px;height:1px;background:#0c1014;"></div>
<div style="left:59px;top:185px;width:1px;height:17px;background:#0c1014;"></div>
<div style="left:0px;top:188px;font:bold 11px/13px 'Liberation Sans', sans-serif;color:#000;letter-spacing:0px;white-space:pre;width:60px;text-align:center;">9</div>
<div style="left:60px;top:201px;width:221px;height:1px;background:#b6b6b6;"></div>
<div style="left:280px;top:185px;width:1px;height:17px;background:#b6b6b6;"></div>
<div style="left:281px;top:201px;width:110px;height:1px;background:#b6b6b6;"></div>
<div style="left:390px;top:185px;width:1px;height:17px;background:#b6b6b6;"></div>
<div style="left:391px;top:201px;width:80px;height:1px;background:#b6b6b6;"></div>
<div style="left:470px;top:185px;width:1px;height:17px;background:#b6b6b6;"></div>
<div style="left:1px;top:202px;width:59px;height:17px;background:#9bb8c6;"></div>
<div style="left:1px;top:202px;width:58px;height:1px;background:#f2f8fb;"></div>
<div style="left:1px;top:202px;width:1px;height:16px;background:#f2f8fb;"></div>
<div style="left:1px;top:218px;width:59px;height:1px;background:#0c1014;"></div>
<div style="left:59px;top:202px;width:1px;height:17px;background:#0c1014;"></div>
<div style="left:0.25px;top:205px;font:bold 11px/13px 'Liberation Sans', sans-serif;color:#000;letter-spacing:0.5px;white-space:pre;width:60px;text-align:center;">10</div>
<div style="left:60px;top:218px;width:221px;height:1px;background:#b6b6b6;"></div>
<div style="left:280px;top:202px;width:1px;height:17px;background:#b6b6b6;"></div>
<div style="left:281px;top:218px;width:110px;height:1px;background:#b6b6b6;"></div>
<div style="left:390px;top:202px;width:1px;height:17px;background:#b6b6b6;"></div>
<div style="left:391px;top:218px;width:80px;height:1px;background:#b6b6b6;"></div>
<div style="left:470px;top:202px;width:1px;height:17px;background:#b6b6b6;"></div>
<div style="left:1px;top:219px;width:59px;height:17px;background:#9bb8c6;"></div>
<div style="left:1px;top:219px;width:58px;height:1px;background:#f2f8fb;"></div>
<div style="left:1px;top:219px;width:1px;height:16px;background:#f2f8fb;"></div>
<div style="left:1px;top:235px;width:59px;height:1px;background:#0c1014;"></div>
<div style="left:59px;top:219px;width:1px;height:17px;background:#0c1014;"></div>
<div style="left:0.25px;top:222px;font:bold 11px/13px 'Liberation Sans', sans-serif;color:#000;letter-spacing:0.5px;white-space:pre;width:60px;text-align:center;">11</div>
<div style="left:60px;top:235px;width:221px;height:1px;background:#b6b6b6;"></div>
<div style="left:280px;top:219px;width:1px;height:17px;background:#b6b6b6;"></div>
<div style="left:281px;top:235px;width:110px;height:1px;background:#b6b6b6;"></div>
<div style="left:390px;top:219px;width:1px;height:17px;background:#b6b6b6;"></div>
<div style="left:391px;top:235px;width:80px;height:1px;background:#b6b6b6;"></div>
<div style="left:470px;top:219px;width:1px;height:17px;background:#b6b6b6;"></div>
<div style="left:1px;top:236px;width:59px;height:17px;background:#9bb8c6;"></div>
<div style="left:1px;top:236px;width:58px;height:1px;background:#f2f8fb;"></div>
<div style="left:1px;top:236px;width:1px;height:16px;background:#f2f8fb;"></div>
<div style="left:1px;top:252px;width:59px;height:1px;background:#0c1014;"></div>
<div style="left:59px;top:236px;width:1px;height:17px;background:#0c1014;"></div>
<div style="left:0.25px;top:239px;font:bold 11px/13px 'Liberation Sans', sans-serif;color:#000;letter-spacing:0.5px;white-space:pre;width:60px;text-align:center;">12</div>
<div style="left:60px;top:252px;width:221px;height:1px;background:#b6b6b6;"></div>
<div style="left:280px;top:236px;width:1px;height:17px;background:#b6b6b6;"></div>
<div style="left:281px;top:252px;width:110px;height:1px;background:#b6b6b6;"></div>
<div style="left:390px;top:236px;width:1px;height:17px;background:#b6b6b6;"></div>
<div style="left:391px;top:252px;width:80px;height:1px;background:#b6b6b6;"></div>
<div style="left:470px;top:236px;width:1px;height:17px;background:#b6b6b6;"></div>
<div style="left:1px;top:253px;width:59px;height:17px;background:#9bb8c6;"></div>
<div style="left:1px;top:253px;width:58px;height:1px;background:#f2f8fb;"></div>
<div style="left:1px;top:253px;width:1px;height:16px;background:#f2f8fb;"></div>
<div style="left:1px;top:269px;width:59px;height:1px;background:#0c1014;"></div>
<div style="left:59px;top:253px;width:1px;height:17px;background:#0c1014;"></div>
<div style="left:0.25px;top:256px;font:bold 11px/13px 'Liberation Sans', sans-serif;color:#000;letter-spacing:0.5px;white-space:pre;width:60px;text-align:center;">13</div>
<div style="left:60px;top:269px;width:221px;height:1px;background:#b6b6b6;"></div>
<div style="left:280px;top:253px;width:1px;height:17px;background:#b6b6b6;"></div>
<div style="left:281px;top:269px;width:110px;height:1px;background:#b6b6b6;"></div>
<div style="left:390px;top:253px;width:1px;height:17px;background:#b6b6b6;"></div>
<div style="left:391px;top:269px;width:80px;height:1px;background:#b6b6b6;"></div>
<div style="left:470px;top:253px;width:1px;height:17px;background:#b6b6b6;"></div>
<div style="left:1px;top:270px;width:59px;height:17px;background:#9bb8c6;"></div>
<div style="left:1px;top:270px;width:58px;height:1px;background:#f2f8fb;"></div>
<div style="left:1px;top:270px;width:1px;height:16px;background:#f2f8fb;"></div>
<div style="left:1px;top:286px;width:59px;height:1px;background:#0c1014;"></div>
<div style="left:59px;top:270px;width:1px;height:17px;background:#0c1014;"></div>
<div style="left:0.25px;top:273px;font:bold 11px/13px 'Liberation Sans', sans-serif;color:#000;letter-spacing:0.5px;white-space:pre;width:60px;text-align:center;">14</div>
<div style="left:60px;top:286px;width:221px;height:1px;background:#b6b6b6;"></div>
<div style="left:280px;top:270px;width:1px;height:17px;background:#b6b6b6;"></div>
<div style="left:281px;top:286px;width:110px;height:1px;background:#b6b6b6;"></div>
<div style="left:390px;top:270px;width:1px;height:17px;background:#b6b6b6;"></div>
<div style="left:391px;top:286px;width:80px;height:1px;background:#b6b6b6;"></div>
<div style="left:470px;top:270px;width:1px;height:17px;background:#b6b6b6;"></div>
<div style="left:1px;top:287px;width:59px;height:17px;background:#9bb8c6;"></div>
<div style="left:1px;top:287px;width:58px;height:1px;background:#f2f8fb;"></div>
<div style="left:1px;top:287px;width:1px;height:16px;background:#f2f8fb;"></div>
<div style="left:1px;top:303px;width:59px;height:1px;background:#0c1014;"></div>
<div style="left:59px;top:287px;width:1px;height:17px;background:#0c1014;"></div>
<div style="left:0.25px;top:290px;font:bold 11px/13px 'Liberation Sans', sans-serif;color:#000;letter-spacing:0.5px;white-space:pre;width:60px;text-align:center;">15</div>
<div style="left:60px;top:303px;width:221px;height:1px;background:#b6b6b6;"></div>
<div style="left:280px;top:287px;width:1px;height:17px;background:#b6b6b6;"></div>
<div style="left:281px;top:303px;width:110px;height:1px;background:#b6b6b6;"></div>
<div style="left:390px;top:287px;width:1px;height:17px;background:#b6b6b6;"></div>
<div style="left:391px;top:303px;width:80px;height:1px;background:#b6b6b6;"></div>
<div style="left:470px;top:287px;width:1px;height:17px;background:#b6b6b6;"></div>
<div style="left:1px;top:304px;width:59px;height:17px;background:#9bb8c6;"></div>
<div style="left:1px;top:304px;width:58px;height:1px;background:#f2f8fb;"></div>
<div style="left:1px;top:304px;width:1px;height:16px;background:#f2f8fb;"></div>
<div style="left:1px;top:320px;width:59px;height:1px;background:#0c1014;"></div>
<div style="left:59px;top:304px;width:1px;height:17px;background:#0c1014;"></div>
<div style="left:0.25px;top:307px;font:bold 11px/13px 'Liberation Sans', sans-serif;color:#000;letter-spacing:0.5px;white-space:pre;width:60px;text-align:center;">16</div>
<div style="left:60px;top:320px;width:221px;height:1px;background:#b6b6b6;"></div>
<div style="left:280px;top:304px;width:1px;height:17px;background:#b6b6b6;"></div>
<div style="left:281px;top:320px;width:110px;height:1px;background:#b6b6b6;"></div>
<div style="left:390px;top:304px;width:1px;height:17px;background:#b6b6b6;"></div>
<div style="left:391px;top:320px;width:80px;height:1px;background:#b6b6b6;"></div>
<div style="left:470px;top:304px;width:1px;height:17px;background:#b6b6b6;"></div>
<div style="left:1px;top:321px;width:59px;height:17px;background:#9bb8c6;"></div>
<div style="left:1px;top:321px;width:58px;height:1px;background:#f2f8fb;"></div>
<div style="left:1px;top:321px;width:1px;height:16px;background:#f2f8fb;"></div>
<div style="left:1px;top:337px;width:59px;height:1px;background:#0c1014;"></div>
<div style="left:59px;top:321px;width:1px;height:17px;background:#0c1014;"></div>
<div style="left:0.25px;top:324px;font:bold 11px/13px 'Liberation Sans', sans-serif;color:#000;letter-spacing:0.5px;white-space:pre;width:60px;text-align:center;">17</div>
<div style="left:60px;top:337px;width:221px;height:1px;background:#b6b6b6;"></div>
<div style="left:280px;top:321px;width:1px;height:17px;background:#b6b6b6;"></div>
<div style="left:281px;top:337px;width:110px;height:1px;background:#b6b6b6;"></div>
<div style="left:390px;top:321px;width:1px;height:17px;background:#b6b6b6;"></div>
<div style="left:391px;top:337px;width:80px;height:1px;background:#b6b6b6;"></div>
<div style="left:470px;top:321px;width:1px;height:17px;background:#b6b6b6;"></div>
<div style="left:479px;top:0px;width:13px;height:335px;background:#d4e2e8;"></div>
<div style="left:479px;top:0px;width:13px;height:13px;background:#9bb8c6;"></div>
<div style="left:479px;top:0px;width:13px;height:1px;background:#d2e2ea;"></div>
<div style="left:479px;top:0px;width:1px;height:13px;background:#d2e2ea;"></div>
<div style="left:480px;top:1px;width:11px;height:1px;background:#e4eef3;"></div>
<div style="left:480px;top:1px;width:1px;height:11px;background:#e4eef3;"></div>
<div style="left:480px;top:11px;width:11px;height:1px;background:#86a0ae;"></div>
<div style="left:490px;top:1px;width:1px;height:11px;background:#86a0ae;"></div>
<div style="left:479px;top:12px;width:13px;height:1px;background:#0c1014;"></div>
<div style="left:491px;top:0px;width:1px;height:13px;background:#0c1014;"></div>
<div style="left:485px;top:5px;width:1px;height:1px;background:#000;"></div>
<div style="left:484px;top:6px;width:3px;height:1px;background:#000;"></div>
<div style="left:483px;top:7px;width:5px;height:1px;background:#000;"></div>
<div style="left:479px;top:322px;width:13px;height:13px;background:#9bb8c6;"></div>
<div style="left:479px;top:322px;width:13px;height:1px;background:#d2e2ea;"></div>
<div style="left:479px;top:322px;width:1px;height:13px;background:#d2e2ea;"></div>
<div style="left:480px;top:323px;width:11px;height:1px;background:#e4eef3;"></div>
<div style="left:480px;top:323px;width:1px;height:11px;background:#e4eef3;"></div>
<div style="left:480px;top:333px;width:11px;height:1px;background:#86a0ae;"></div>
<div style="left:490px;top:323px;width:1px;height:11px;background:#86a0ae;"></div>
<div style="left:479px;top:334px;width:13px;height:1px;background:#0c1014;"></div>
<div style="left:491px;top:322px;width:1px;height:13px;background:#0c1014;"></div>
<div style="left:483px;top:327px;width:5px;height:1px;background:#000;"></div>
<div style="left:484px;top:328px;width:3px;height:1px;background:#000;"></div>
<div style="left:485px;top:329px;width:1px;height:1px;background:#000;"></div>
<div style="left:479px;top:13px;width:13px;height:6px;background:#9bb8c6;"></div>
<div style="left:479px;top:13px;width:13px;height:1px;background:#d2e2ea;"></div>
<div style="left:479px;top:13px;width:1px;height:6px;background:#d2e2ea;"></div>
<div style="left:480px;top:14px;width:11px;height:1px;background:#e4eef3;"></div>
<div style="left:480px;top:14px;width:1px;height:4px;background:#e4eef3;"></div>
<div style="left:480px;top:17px;width:11px;height:1px;background:#86a0ae;"></div>
<div style="left:490px;top:14px;width:1px;height:4px;background:#86a0ae;"></div>
<div style="left:479px;top:18px;width:13px;height:1px;background:#0c1014;"></div>
<div style="left:491px;top:13px;width:1px;height:6px;background:#0c1014;"></div>
<div style="left:0px;top:335px;width:492px;height:13px;background:#d4e2e8;"></div>
<div style="left:0px;top:335px;width:13px;height:13px;background:#9bb8c6;"></div>
<div style="left:0px;top:335px;width:13px;height:1px;background:#d2e2ea;"></div>
<div style="left:0px;top:335px;width:1px;height:13px;background:#d2e2ea;"></div>
<div style="left:1px;top:336px;width:11px;height:1px;background:#e4eef3;"></div>
<div style="left:1px;top:336px;width:1px;height:11px;background:#e4eef3;"></div>
<div style="left:1px;top:346px;width:11px;height:1px;background:#86a0ae;"></div>
<div style="left:11px;top:336px;width:1px;height:11px;background:#86a0ae;"></div>
<div style="left:0px;top:347px;width:13px;height:1px;background:#0c1014;"></div>
<div style="left:12px;top:335px;width:1px;height:13px;background:#0c1014;"></div>
<div style="left:4px;top:341px;width:1px;height:1px;background:#000;"></div>
<div style="left:5px;top:340px;width:1px;height:3px;background:#000;"></div>
<div style="left:6px;top:339px;width:1px;height:5px;background:#000;"></div>
<div style="left:13px;top:335px;width:453px;height:13px;background:#9bb8c6;"></div>
<div style="left:13px;top:335px;width:453px;height:1px;background:#d2e2ea;"></div>
<div style="left:13px;top:335px;width:1px;height:13px;background:#d2e2ea;"></div>
<div style="left:14px;top:336px;width:451px;height:1px;background:#e4eef3;"></div>
<div style="left:14px;top:336px;width:1px;height:11px;background:#e4eef3;"></div>
<div style="left:14px;top:346px;width:451px;height:1px;background:#86a0ae;"></div>
<div style="left:464px;top:336px;width:1px;height:11px;background:#86a0ae;"></div>
<div style="left:13px;top:347px;width:453px;height:1px;background:#0c1014;"></div>
<div style="left:465px;top:335px;width:1px;height:13px;background:#0c1014;"></div>
<div style="left:466px;top:335px;width:13px;height:13px;background:#9bb8c6;"></div>
<div style="left:466px;top:335px;width:13px;height:1px;background:#d2e2ea;"></div>
<div style="left:466px;top:335px;width:1px;height:13px;background:#d2e2ea;"></div>
<div style="left:467px;top:336px;width:11px;height:1px;background:#e4eef3;"></div>
<div style="left:467px;top:336px;width:1px;height:11px;background:#e4eef3;"></div>
<div style="left:467px;top:346px;width:11px;height:1px;background:#86a0ae;"></div>
<div style="left:477px;top:336px;width:1px;height:11px;background:#86a0ae;"></div>
<div style="left:466px;top:347px;width:13px;height:1px;background:#0c1014;"></div>
<div style="left:478px;top:335px;width:1px;height:13px;background:#0c1014;"></div>
<div style="left:474px;top:341px;width:1px;height:1px;background:#000;"></div>
<div style="left:473px;top:340px;width:1px;height:3px;background:#000;"></div>
<div style="left:472px;top:339px;width:1px;height:5px;background:#000;"></div>
<div style="left:479px;top:335px;width:13px;height:13px;background:#9bb8c6;"></div>
</div>
<div style="left:98px;top:85px;width:774px;height:501px;background:#9bb8c6;"></div>
<div style="left:98px;top:85px;width:774px;height:1px;background:#cfe0e8;"></div>
<div style="left:98px;top:85px;width:1px;height:501px;background:#cfe0e8;"></div>
<div style="left:99px;top:86px;width:772px;height:1px;background:#c6d8e0;"></div>
<div style="left:99px;top:86px;width:1px;height:499px;background:#c6d8e0;"></div>
<div style="left:99px;top:584px;width:772px;height:1px;background:#8aa4b2;"></div>
<div style="left:870px;top:86px;width:1px;height:499px;background:#8aa4b2;"></div>
<div style="left:98px;top:585px;width:774px;height:1px;background:#0c1014;"></div>
<div style="left:871px;top:85px;width:1px;height:501px;background:#0c1014;"></div>
<div style="left:102px;top:89px;width:766px;height:18px;background:linear-gradient(to right,#528294,#86b6da);"></div>
<svg style="position:absolute;left:104px;top:92px" width="16" height="13" viewBox="0 0 16 13" shape-rendering="crispEdges">
<rect x="1" y="2" width="6" height="4" fill="#c07080" opacity="0.4"/>
<rect x="1" y="6" width="6" height="5" fill="#4050c0" opacity="0.5"/>
<g fill="#000">
<rect x="0" y="1" width="1" height="1"/><rect x="1" y="2" width="1" height="1"/><rect x="0" y="5" width="1" height="1"/><rect x="1" y="6" width="1" height="1"/><rect x="0" y="9" width="1" height="1"/><rect x="1" y="10" width="1" height="1"/>
<rect x="3" y="2" width="2" height="1"/><rect x="4" y="3" width="1" height="1"/><rect x="3" y="6" width="2" height="1"/><rect x="4" y="7" width="1" height="1"/><rect x="3" y="10" width="2" height="1"/><rect x="4" y="11" width="1" height="1"/>
<rect x="6" y="2" width="1" height="1"/><rect x="6" y="6" width="1" height="1"/><rect x="6" y="8" width="1" height="1"/><rect x="6" y="10" width="1" height="1"/>
</g>
<path d="M8 1h2v-1h4v1h1v11h-1v-1h-4v1h-2z" fill="#000"/>
<rect x="9" y="1" width="3" height="4" fill="#7a3444"/>
<rect x="12" y="2" width="2" height="4" fill="#78c880"/>
<rect x="9" y="6" width="3" height="4" fill="#222a70"/>
<rect x="12" y="6" width="2" height="3" fill="#f4ecb0"/>
</svg>
<div style="left:122px;top:92px;font:bold 12px/13px 'Liberation Sans', sans-serif;color:#fff;letter-spacing:0.35px;white-space:pre;">C:\Program Files\jeux\NWN\NWN\tlk\test53F.tlk</div>
<div style="left:816px;top:91px;width:16px;height:14px;background:#a6c0cc;"></div>
<div style="left:816px;top:91px;width:16px;height:1px;background:#d2e2ea;"></div>
<div style="left:816px;top:91px;width:1px;height:14px;background:#d2e2ea;"></div>
<div style="left:817px;top:92px;width:14px;height:1px;background:#e4eef3;"></div>
<div style="left:817px;top:92px;width:1px;height:12px;background:#e4eef3;"></div>
<div style="left:817px;top:103px;width:14px;height:1px;background:#86a0ae;"></div>
<div style="left:830px;top:92px;width:1px;height:12px;background:#86a0ae;"></div>
<div style="left:816px;top:104px;width:16px;height:1px;background:#0c1014;"></div>
<div style="left:831px;top:91px;width:1px;height:14px;background:#0c1014;"></div>
<div style="left:820px;top:100px;width:6px;height:2px;background:#000;"></div>
<div style="left:832px;top:91px;width:16px;height:14px;background:#a6c0cc;"></div>
<div style="left:832px;top:91px;width:16px;height:1px;background:#d2e2ea;"></div>
<div style="left:832px;top:91px;width:1px;height:14px;background:#d2e2ea;"></div>
<div style="left:833px;top:92px;width:14px;height:1px;background:#e4eef3;"></div>
<div style="left:833px;top:92px;width:1px;height:12px;background:#e4eef3;"></div>
<div style="left:833px;top:103px;width:14px;height:1px;background:#86a0ae;"></div>
<div style="left:846px;top:92px;width:1px;height:12px;background:#86a0ae;"></div>
<div style="left:832px;top:104px;width:16px;height:1px;background:#0c1014;"></div>
<div style="left:847px;top:91px;width:1px;height:14px;background:#0c1014;"></div>
<div style="left:835px;top:93px;width:9px;height:9px;border:1px solid #000;border-top-width:2px;box-sizing:border-box;"></div>
<div style="left:850px;top:91px;width:16px;height:14px;background:#a6c0cc;"></div>
<div style="left:850px;top:91px;width:16px;height:1px;background:#d2e2ea;"></div>
<div style="left:850px;top:91px;width:1px;height:14px;background:#d2e2ea;"></div>
<div style="left:851px;top:92px;width:14px;height:1px;background:#e4eef3;"></div>
<div style="left:851px;top:92px;width:1px;height:12px;background:#e4eef3;"></div>
<div style="left:851px;top:103px;width:14px;height:1px;background:#86a0ae;"></div>
<div style="left:864px;top:92px;width:1px;height:12px;background:#86a0ae;"></div>
<div style="left:850px;top:104px;width:16px;height:1px;background:#0c1014;"></div>
<div style="left:865px;top:91px;width:1px;height:14px;background:#0c1014;"></div>
<svg style="position:absolute;left:850px;top:91px" width="16" height="14" viewBox="0 0 16 14"><path d="M4.5 3.5L11.5 10.5M11.5 3.5L4.5 10.5" stroke="#000" stroke-width="1.6" fill="none"/></svg>
<div style="left:102px;top:108px;width:766px;height:474px;overflow:hidden;background:#fff">
<div style="left:0px;top:0px;width:753px;height:461px;background:#fff;"></div>
<div style="left:0px;top:0px;width:753px;height:32px;background:#9bb8c6;"></div>
<div style="left:0px;top:0px;width:1px;height:461px;background:#0c1014;"></div>
<div style="left:1px;top:1px;width:59px;height:31px;background:#9bb8c6;"></div>
<div style="left:1px;top:1px;width:58px;height:1px;background:#f2f8fb;"></div>
<div style="left:1px;top:1px;width:1px;height:30px;background:#f2f8fb;"></div>
<div style="left:1px;top:31px;width:59px;height:1px;background:#0c1014;"></div>
<div style="left:59px;top:1px;width:1px;height:31px;background:#0c1014;"></div>
<div style="left:60px;top:1px;width:685px;height:31px;background:#9bb8c6;"></div>
<div style="left:60px;top:1px;width:684px;height:1px;background:#f2f8fb;"></div>
<div style="left:60px;top:1px;width:1px;height:30px;background:#f2f8fb;"></div>
<div style="left:60px;top:31px;width:685px;height:1px;background:#0c1014;"></div>
<div style="left:744px;top:1px;width:1px;height:31px;background:#0c1014;"></div>
<div style="left:60.6px;top:10px;font:bold 11px/13px 'Liberation Sans', sans-serif;color:#000;letter-spacing:1.2px;white-space:pre;width:685px;text-align:center;">Text</div>
<div style="left:0px;top:0px;width:745px;height:1px;background:#0c1014;"></div>
<div style="left:1px;top:32px;width:59px;height:17px;background:#9bb8c6;"></div>
<div style="left:1px;top:32px;width:58px;height:1px;background:#f2f8fb;"></div>
<div style="left:1px;top:32px;width:1px;height:16px;background:#f2f8fb;"></div>
<div style="left:1px;top:48px;width:59px;height:1px;background:#0c1014;"></div>
<div style="left:59px;top:32px;width:1px;height:17px;background:#0c1014;"></div>
<div style="left:0px;top:35px;font:bold 11px/13px 'Liberation Sans', sans-serif;color:#000;letter-spacing:0px;white-space:pre;width:60px;text-align:center;">0</div>
<div style="left:60px;top:48px;width:685px;height:1px;background:#b6b6b6;"></div>
<div style="left:744px;top:32px;width:1px;height:17px;background:#b6b6b6;"></div>
<div style="left:1px;top:49px;width:59px;height:17px;background:#9bb8c6;"></div>
<div style="left:1px;top:49px;width:58px;height:1px;background:#f2f8fb;"></div>
<div style="left:1px;top:49px;width:1px;height:16px;background:#f2f8fb;"></div>
<div style="left:1px;top:65px;width:59px;height:1px;background:#0c1014;"></div>
<div style="left:59px;top:49px;width:1px;height:17px;background:#0c1014;"></div>
<div style="left:0px;top:52px;font:bold 11px/13px 'Liberation Sans', sans-serif;color:#000;letter-spacing:0px;white-space:pre;width:60px;text-align:center;">1</div>
<div style="left:60px;top:65px;width:685px;height:1px;background:#b6b6b6;"></div>
<div style="left:744px;top:49px;width:1px;height:17px;background:#b6b6b6;"></div>
<div style="left:61px;top:52px;font:normal 11px/13px 'Liberation Sans', sans-serif;color:#000;letter-spacing:-0.13px;white-space:pre;">Rappelez-vous l'objet que nous vimes, mon ame,</div>
<div style="left:1px;top:66px;width:59px;height:17px;background:#9bb8c6;"></div>
<div style="left:1px;top:66px;width:58px;height:1px;background:#f2f8fb;"></div>
<div style="left:1px;top:66px;width:1px;height:16px;background:#f2f8fb;"></div>
<div style="left:1px;top:82px;width:59px;height:1px;background:#0c1014;"></div>
<div style="left:59px;top:66px;width:1px;height:17px;background:#0c1014;"></div>
<div style="left:0px;top:69px;font:bold 11px/13px 'Liberation Sans', sans-serif;color:#000;letter-spacing:0px;white-space:pre;width:60px;text-align:center;">2</div>
<div style="left:60px;top:82px;width:685px;height:1px;background:#b6b6b6;"></div>
<div style="left:744px;top:66px;width:1px;height:17px;background:#b6b6b6;"></div>
<div style="left:61px;top:69px;font:normal 11px/13px 'Liberation Sans', sans-serif;color:#000;letter-spacing:-0.13px;white-space:pre;">Barde</div>
<div style="left:1px;top:83px;width:59px;height:17px;background:#9bb8c6;"></div>
<div style="left:1px;top:83px;width:58px;height:1px;background:#f2f8fb;"></div>
<div style="left:1px;top:83px;width:1px;height:16px;background:#f2f8fb;"></div>
<div style="left:1px;top:99px;width:59px;height:1px;background:#0c1014;"></div>
<div style="left:59px;top:83px;width:1px;height:17px;background:#0c1014;"></div>
<div style="left:0px;top:86px;font:bold 11px/13px 'Liberation Sans', sans-serif;color:#000;letter-spacing:0px;white-space:pre;width:60px;text-align:center;">3</div>
<div style="left:60px;top:99px;width:685px;height:1px;background:#b6b6b6;"></div>
<div style="left:744px;top:83px;width:1px;height:17px;background:#b6b6b6;"></div>
<div style="left:61px;top:86px;font:normal 11px/13px 'Liberation Sans', sans-serif;color:#000;letter-spacing:-0.13px;white-space:pre;">Bardes</div>
<div style="left:1px;top:100px;width:59px;height:17px;background:#9bb8c6;"></div>
<div style="left:1px;top:100px;width:58px;height:1px;background:#f2f8fb;"></div>
<div style="left:1px;top:100px;width:1px;height:16px;background:#f2f8fb;"></div>
<div style="left:1px;top:116px;width:59px;height:1px;background:#0c1014;"></div>
<div style="left:59px;top:100px;width:1px;height:17px;background:#0c1014;"></div>
<div style="left:0px;top:103px;font:bold 11px/13px 'Liberation Sans', sans-serif;color:#000;letter-spacing:0px;white-space:pre;width:60px;text-align:center;">4</div>
<div style="left:60px;top:116px;width:685px;height:1px;background:#b6b6b6;"></div>
<div style="left:744px;top:100px;width:1px;height:17px;background:#b6b6b6;"></div>
<div style="left:61px;top:103px;font:normal 11px/13px 'Liberation Sans', sans-serif;color:#000;letter-spacing:-0.13px;white-space:pre;">Prêtresse</div>
<div style="left:1px;top:117px;width:59px;height:17px;background:#9bb8c6;"></div>
<div style="left:1px;top:117px;width:58px;height:1px;background:#f2f8fb;"></div>
<div style="left:1px;top:117px;width:1px;height:16px;background:#f2f8fb;"></div>
<div style="left:1px;top:133px;width:59px;height:1px;background:#0c1014;"></div>
<div style="left:59px;top:117px;width:1px;height:17px;background:#0c1014;"></div>
<div style="left:0px;top:120px;font:bold 11px/13px 'Liberation Sans', sans-serif;color:#000;letter-spacing:0px;white-space:pre;width:60px;text-align:center;">5</div>
<div style="left:60px;top:133px;width:685px;height:1px;background:#b6b6b6;"></div>
<div style="left:744px;top:117px;width:1px;height:17px;background:#b6b6b6;"></div>
<div style="left:61px;top:120px;font:normal 11px/13px 'Liberation Sans', sans-serif;color:#000;letter-spacing:-0.13px;white-space:pre;">Prêtresses</div>
<div style="left:1px;top:134px;width:59px;height:17px;background:#9bb8c6;"></div>
<div style="left:1px;top:134px;width:58px;height:1px;background:#f2f8fb;"></div>
<div style="left:1px;top:134px;width:1px;height:16px;background:#f2f8fb;"></div>
<div style="left:1px;top:150px;width:59px;height:1px;background:#0c1014;"></div>
<div style="left:59px;top:134px;width:1px;height:17px;background:#0c1014;"></div>
<div style="left:0px;top:137px;font:bold 11px/13px 'Liberation Sans', sans-serif;color:#000;letter-spacing:0px;white-space:pre;width:60px;text-align:center;">6</div>
<div style="left:60px;top:150px;width:685px;height:1px;background:#b6b6b6;"></div>
<div style="left:744px;top:134px;width:1px;height:17px;background:#b6b6b6;"></div>
<div style="left:61px;top:137px;font:normal 11px/13px 'Liberation Sans', sans-serif;color:#000;letter-spacing:-0.13px;white-space:pre;">Druidesse</div>
<div style="left:1px;top:151px;width:59px;height:17px;background:#9bb8c6;"></div>
<div style="left:1px;top:151px;width:58px;height:1px;background:#f2f8fb;"></div>
<div style="left:1px;top:151px;width:1px;height:16px;background:#f2f8fb;"></div>
<div style="left:1px;top:167px;width:59px;height:1px;background:#0c1014;"></div>
<div style="left:59px;top:151px;width:1px;height:17px;background:#0c1014;"></div>
<div style="left:0px;top:154px;font:bold 11px/13px 'Liberation Sans', sans-serif;color:#000;letter-spacing:0px;white-space:pre;width:60px;text-align:center;">7</div>
<div style="left:60px;top:167px;width:685px;height:1px;background:#b6b6b6;"></div>
<div style="left:744px;top:151px;width:1px;height:17px;background:#b6b6b6;"></div>
<div style="left:61px;top:154px;font:normal 11px/13px 'Liberation Sans', sans-serif;color:#000;letter-spacing:-0.13px;white-space:pre;">Druidesses</div>
<div style="left:1px;top:168px;width:59px;height:17px;background:#9bb8c6;"></div>
<div style="left:1px;top:168px;width:58px;height:1px;background:#f2f8fb;"></div>
<div style="left:1px;top:168px;width:1px;height:16px;background:#f2f8fb;"></div>
<div style="left:1px;top:184px;width:59px;height:1px;background:#0c1014;"></div>
<div style="left:59px;top:168px;width:1px;height:17px;background:#0c1014;"></div>
<div style="left:0px;top:171px;font:bold 11px/13px 'Liberation Sans', sans-serif;color:#000;letter-spacing:0px;white-space:pre;width:60px;text-align:center;">8</div>
<div style="left:60px;top:184px;width:685px;height:1px;background:#b6b6b6;"></div>
<div style="left:744px;top:168px;width:1px;height:17px;background:#b6b6b6;"></div>
<div style="left:61px;top:171px;font:normal 11px/13px 'Liberation Sans', sans-serif;color:#000;letter-spacing:-0.13px;white-space:pre;">Guerrière</div>
<div style="left:1px;top:185px;width:59px;height:17px;background:#9bb8c6;"></div>
<div style="left:1px;top:185px;width:58px;height:1px;background:#f2f8fb;"></div>
<div style="left:1px;top:185px;width:1px;height:16px;background:#f2f8fb;"></div>
<div style="left:1px;top:201px;width:59px;height:1px;background:#0c1014;"></div>
<div style="left:59px;top:185px;width:1px;height:17px;background:#0c1014;"></div>
<div style="left:0px;top:188px;font:bold 11px/13px 'Liberation Sans', sans-serif;color:#000;letter-spacing:0px;white-space:pre;width:60px;text-align:center;">9</div>
<div style="left:60px;top:201px;width:685px;height:1px;background:#b6b6b6;"></div>
<div style="left:744px;top:185px;width:1px;height:17px;background:#b6b6b6;"></div>
<div style="left:61px;top:188px;font:normal 11px/13px 'Liberation Sans', sans-serif;color:#000;letter-spacing:-0.13px;white-space:pre;">Guerrières</div>
<div style="left:1px;top:202px;width:59px;height:17px;background:#9bb8c6;"></div>
<div style="left:1px;top:202px;width:58px;height:1px;background:#f2f8fb;"></div>
<div style="left:1px;top:202px;width:1px;height:16px;background:#f2f8fb;"></div>
<div style="left:1px;top:218px;width:59px;height:1px;background:#0c1014;"></div>
<div style="left:59px;top:202px;width:1px;height:17px;background:#0c1014;"></div>
<div style="left:0.25px;top:205px;font:bold 11px/13px 'Liberation Sans', sans-serif;color:#000;letter-spacing:0.5px;white-space:pre;width:60px;text-align:center;">10</div>
<div style="left:60px;top:218px;width:685px;height:1px;background:#b6b6b6;"></div>
<div style="left:744px;top:202px;width:1px;height:17px;background:#b6b6b6;"></div>
<div style="left:61px;top:205px;font:normal 11px/13px 'Liberation Sans', sans-serif;color:#000;letter-spacing:-0.13px;white-space:pre;">Moine</div>
<div style="left:1px;top:219px;width:59px;height:17px;background:#9bb8c6;"></div>
<div style="left:1px;top:219px;width:58px;height:1px;background:#f2f8fb;"></div>
<div style="left:1px;top:219px;width:1px;height:16px;background:#f2f8fb;"></div>
<div style="left:1px;top:235px;width:59px;height:1px;background:#0c1014;"></div>
<div style="left:59px;top:219px;width:1px;height:17px;background:#0c1014;"></div>
<div style="left:0.25px;top:222px;font:bold 11px/13px 'Liberation Sans', sans-serif;color:#000;letter-spacing:0.5px;white-space:pre;width:60px;text-align:center;">11</div>
<div style="left:60px;top:235px;width:685px;height:1px;background:#b6b6b6;"></div>
<div style="left:744px;top:219px;width:1px;height:17px;background:#b6b6b6;"></div>
<div style="left:61px;top:222px;font:normal 11px/13px 'Liberation Sans', sans-serif;color:#000;letter-spacing:-0.13px;white-space:pre;">Moines</div>
<div style="left:1px;top:236px;width:59px;height:17px;background:#9bb8c6;"></div>
<div style="left:1px;top:236px;width:58px;height:1px;background:#f2f8fb;"></div>
<div style="left:1px;top:236px;width:1px;height:16px;background:#f2f8fb;"></div>
<div style="left:1px;top:252px;width:59px;height:1px;background:#0c1014;"></div>
<div style="left:59px;top:236px;width:1px;height:17px;background:#0c1014;"></div>
<div style="left:0.25px;top:239px;font:bold 11px/13px 'Liberation Sans', sans-serif;color:#000;letter-spacing:0.5px;white-space:pre;width:60px;text-align:center;">12</div>
<div style="left:60px;top:252px;width:685px;height:1px;background:#b6b6b6;"></div>
<div style="left:744px;top:236px;width:1px;height:17px;background:#b6b6b6;"></div>
<div style="left:61px;top:239px;font:normal 11px/13px 'Liberation Sans', sans-serif;color:#000;letter-spacing:-0.13px;white-space:pre;">Paladine</div>
<div style="left:1px;top:253px;width:59px;height:17px;background:#9bb8c6;"></div>
<div style="left:1px;top:253px;width:58px;height:1px;background:#f2f8fb;"></div>
<div style="left:1px;top:253px;width:1px;height:16px;background:#f2f8fb;"></div>
<div style="left:1px;top:269px;width:59px;height:1px;background:#0c1014;"></div>
<div style="left:59px;top:253px;width:1px;height:17px;background:#0c1014;"></div>
<div style="left:0.25px;top:256px;font:bold 11px/13px 'Liberation Sans', sans-serif;color:#000;letter-spacing:0.5px;white-space:pre;width:60px;text-align:center;">13</div>
<div style="left:60px;top:269px;width:685px;height:1px;background:#b6b6b6;"></div>
<div style="left:744px;top:253px;width:1px;height:17px;background:#b6b6b6;"></div>
<div style="left:61px;top:256px;font:normal 11px/13px 'Liberation Sans', sans-serif;color:#000;letter-spacing:-0.13px;white-space:pre;">Paladines</div>
<div style="left:1px;top:270px;width:59px;height:17px;background:#9bb8c6;"></div>
<div style="left:1px;top:270px;width:58px;height:1px;background:#f2f8fb;"></div>
<div style="left:1px;top:270px;width:1px;height:16px;background:#f2f8fb;"></div>
<div style="left:1px;top:286px;width:59px;height:1px;background:#0c1014;"></div>
<div style="left:59px;top:270px;width:1px;height:17px;background:#0c1014;"></div>
<div style="left:0.25px;top:273px;font:bold 11px/13px 'Liberation Sans', sans-serif;color:#000;letter-spacing:0.5px;white-space:pre;width:60px;text-align:center;">14</div>
<div style="left:60px;top:286px;width:685px;height:1px;background:#b6b6b6;"></div>
<div style="left:744px;top:270px;width:1px;height:17px;background:#b6b6b6;"></div>
<div style="left:61px;top:273px;font:normal 11px/13px 'Liberation Sans', sans-serif;color:#000;letter-spacing:-0.13px;white-space:pre;">Rôdeuse</div>
<div style="left:1px;top:287px;width:59px;height:17px;background:#9bb8c6;"></div>
<div style="left:1px;top:287px;width:58px;height:1px;background:#f2f8fb;"></div>
<div style="left:1px;top:287px;width:1px;height:16px;background:#f2f8fb;"></div>
<div style="left:1px;top:303px;width:59px;height:1px;background:#0c1014;"></div>
<div style="left:59px;top:287px;width:1px;height:17px;background:#0c1014;"></div>
<div style="left:0.25px;top:290px;font:bold 11px/13px 'Liberation Sans', sans-serif;color:#000;letter-spacing:0.5px;white-space:pre;width:60px;text-align:center;">15</div>
<div style="left:60px;top:303px;width:685px;height:1px;background:#b6b6b6;"></div>
<div style="left:744px;top:287px;width:1px;height:17px;background:#b6b6b6;"></div>
<div style="left:61px;top:290px;font:normal 11px/13px 'Liberation Sans', sans-serif;color:#000;letter-spacing:-0.13px;white-space:pre;">Rôdeuses</div>
<div style="left:1px;top:304px;width:59px;height:17px;background:#9bb8c6;"></div>
<div style="left:1px;top:304px;width:58px;height:1px;background:#f2f8fb;"></div>
<div style="left:1px;top:304px;width:1px;height:16px;background:#f2f8fb;"></div>
<div style="left:1px;top:320px;width:59px;height:1px;background:#0c1014;"></div>
<div style="left:59px;top:304px;width:1px;height:17px;background:#0c1014;"></div>
<div style="left:0.25px;top:307px;font:bold 11px/13px 'Liberation Sans', sans-serif;color:#000;letter-spacing:0.5px;white-space:pre;width:60px;text-align:center;">16</div>
<div style="left:60px;top:320px;width:685px;height:1px;background:#b6b6b6;"></div>
<div style="left:744px;top:304px;width:1px;height:17px;background:#b6b6b6;"></div>
<div style="left:61px;top:307px;font:normal 11px/13px 'Liberation Sans', sans-serif;color:#000;letter-spacing:-0.13px;white-space:pre;">Roublarde</div>
<div style="left:1px;top:321px;width:59px;height:17px;background:#9bb8c6;"></div>
<div style="left:1px;top:321px;width:58px;height:1px;background:#f2f8fb;"></div>
<div style="left:1px;top:321px;width:1px;height:16px;background:#f2f8fb;"></div>
<div style="left:1px;top:337px;width:59px;height:1px;background:#0c1014;"></div>
<div style="left:59px;top:321px;width:1px;height:17px;background:#0c1014;"></div>
<div style="left:0.25px;top:324px;font:bold 11px/13px 'Liberation Sans', sans-serif;color:#000;letter-spacing:0.5px;white-space:pre;width:60px;text-align:center;">17</div>
<div style="left:60px;top:337px;width:685px;height:1px;background:#b6b6b6;"></div>
<div style="left:744px;top:321px;width:1px;height:17px;background:#b6b6b6;"></div>
<div style="left:61px;top:324px;font:normal 11px/13px 'Liberation Sans', sans-serif;color:#000;letter-spacing:-0.13px;white-space:pre;">Roublardes</div>
<div style="left:1px;top:338px;width:59px;height:17px;background:#9bb8c6;"></div>
<div style="left:1px;top:338px;width:58px;height:1px;background:#f2f8fb;"></div>
<div style="left:1px;top:338px;width:1px;height:16px;background:#f2f8fb;"></div>
<div style="left:1px;top:354px;width:59px;height:1px;background:#0c1014;"></div>
<div style="left:59px;top:338px;width:1px;height:17px;background:#0c1014;"></div>
<div style="left:0.25px;top:341px;font:bold 11px/13px 'Liberation Sans', sans-serif;color:#000;letter-spacing:0.5px;white-space:pre;width:60px;text-align:center;">18</div>
<div style="left:60px;top:354px;width:685px;height:1px;background:#b6b6b6;"></div>
<div style="left:744px;top:338px;width:1px;height:17px;background:#b6b6b6;"></div>
<div style="left:61px;top:341px;font:normal 11px/13px 'Liberation Sans', sans-serif;color:#000;letter-spacing:-0.13px;white-space:pre;">Ensorceleuse</div>
<div style="left:1px;top:355px;width:59px;height:17px;background:#9bb8c6;"></div>
<div style="left:1px;top:355px;width:58px;height:1px;background:#f2f8fb;"></div>
<div style="left:1px;top:355px;width:1px;height:16px;background:#f2f8fb;"></div>
<div style="left:1px;top:371px;width:59px;height:1px;background:#0c1014;"></div>
<div style="left:59px;top:355px;width:1px;height:17px;background:#0c1014;"></div>
<div style="left:0.25px;top:358px;font:bold 11px/13px 'Liberation Sans', sans-serif;color:#000;letter-spacing:0.5px;white-space:pre;width:60px;text-align:center;">19</div>
<div style="left:60px;top:371px;width:685px;height:1px;background:#b6b6b6;"></div>
<div style="left:744px;top:355px;width:1px;height:17px;background:#b6b6b6;"></div>
<div style="left:61px;top:358px;font:normal 11px/13px 'Liberation Sans', sans-serif;color:#000;letter-spacing:-0.13px;white-space:pre;">Ensorceleuses</div>
<div style="left:1px;top:372px;width:59px;height:17px;background:#9bb8c6;"></div>
<div style="left:1px;top:372px;width:58px;height:1px;background:#f2f8fb;"></div>
<div style="left:1px;top:372px;width:1px;height:16px;background:#f2f8fb;"></div>
<div style="left:1px;top:388px;width:59px;height:1px;background:#0c1014;"></div>
<div style="left:59px;top:372px;width:1px;height:17px;background:#0c1014;"></div>
<div style="left:0.25px;top:375px;font:bold 11px/13px 'Liberation Sans', sans-serif;color:#000;letter-spacing:0.5px;white-space:pre;width:60px;text-align:center;">20</div>
<div style="left:60px;top:388px;width:685px;height:1px;background:#b6b6b6;"></div>
<div style="left:744px;top:372px;width:1px;height:17px;background:#b6b6b6;"></div>
<div style="left:61px;top:375px;font:normal 11px/13px 'Liberation Sans', sans-serif;color:#000;letter-spacing:-0.13px;white-space:pre;">Magicienne</div>
<div style="left:1px;top:389px;width:59px;height:17px;background:#9bb8c6;"></div>
<div style="left:1px;top:389px;width:58px;height:1px;background:#f2f8fb;"></div>
<div style="left:1px;top:389px;width:1px;height:16px;background:#f2f8fb;"></div>
<div style="left:1px;top:405px;width:59px;height:1px;background:#0c1014;"></div>
<div style="left:59px;top:389px;width:1px;height:17px;background:#0c1014;"></div>
<div style="left:0.25px;top:392px;font:bold 11px/13px 'Liberation Sans', sans-serif;color:#000;letter-spacing:0.5px;white-space:pre;width:60px;text-align:center;">21</div>
<div style="left:60px;top:405px;width:685px;height:1px;background:#b6b6b6;"></div>
<div style="left:744px;top:389px;width:1px;height:17px;background:#b6b6b6;"></div>
<div style="left:61px;top:392px;font:normal 11px/13px 'Liberation Sans', sans-serif;color:#000;letter-spacing:-0.13px;white-space:pre;">Magiciennes</div>
<div style="left:1px;top:406px;width:59px;height:17px;background:#9bb8c6;"></div>
<div style="left:1px;top:406px;width:58px;height:1px;background:#f2f8fb;"></div>
<div style="left:1px;top:406px;width:1px;height:16px;background:#f2f8fb;"></div>
<div style="left:1px;top:422px;width:59px;height:1px;background:#0c1014;"></div>
<div style="left:59px;top:406px;width:1px;height:17px;background:#0c1014;"></div>
<div style="left:0.25px;top:409px;font:bold 11px/13px 'Liberation Sans', sans-serif;color:#000;letter-spacing:0.5px;white-space:pre;width:60px;text-align:center;">22</div>
<div style="left:60px;top:422px;width:685px;height:1px;background:#b6b6b6;"></div>
<div style="left:744px;top:406px;width:1px;height:17px;background:#b6b6b6;"></div>
<div style="left:61px;top:409px;font:normal 11px/13px 'Liberation Sans', sans-serif;color:#000;letter-spacing:-0.13px;white-space:pre;">Naine</div>
<div style="left:1px;top:423px;width:59px;height:17px;background:#9bb8c6;"></div>
<div style="left:1px;top:423px;width:58px;height:1px;background:#f2f8fb;"></div>
<div style="left:1px;top:423px;width:1px;height:16px;background:#f2f8fb;"></div>
<div style="left:1px;top:439px;width:59px;height:1px;background:#0c1014;"></div>
<div style="left:59px;top:423px;width:1px;height:17px;background:#0c1014;"></div>
<div style="left:0.25px;top:426px;font:bold 11px/13px 'Liberation Sans', sans-serif;color:#000;letter-spacing:0.5px;white-space:pre;width:60px;text-align:center;">23</div>
<div style="left:60px;top:439px;width:685px;height:1px;background:#b6b6b6;"></div>
<div style="left:744px;top:423px;width:1px;height:17px;background:#b6b6b6;"></div>
<div style="left:61px;top:426px;font:normal 11px/13px 'Liberation Sans', sans-serif;color:#000;letter-spacing:-0.13px;white-space:pre;">Naines</div>
<div style="left:1px;top:440px;width:59px;height:17px;background:#9bb8c6;"></div>
<div style="left:1px;top:440px;width:58px;height:1px;background:#f2f8fb;"></div>
<div style="left:1px;top:440px;width:1px;height:16px;background:#f2f8fb;"></div>
<div style="left:1px;top:456px;width:59px;height:1px;background:#0c1014;"></div>
<div style="left:59px;top:440px;width:1px;height:17px;background:#0c1014;"></div>
<div style="left:0.25px;top:443px;font:bold 11px/13px 'Liberation Sans', sans-serif;color:#000;letter-spacing:0.5px;white-space:pre;width:60px;text-align:center;">24</div>
<div style="left:60px;top:456px;width:685px;height:1px;background:#b6b6b6;"></div>
<div style="left:744px;top:440px;width:1px;height:17px;background:#b6b6b6;"></div>
<div style="left:61px;top:443px;font:normal 11px/13px 'Liberation Sans', sans-serif;color:#000;letter-spacing:-0.13px;white-space:pre;">Elfe</div>
<div style="left:1px;top:457px;width:59px;height:17px;background:#9bb8c6;"></div>
<div style="left:1px;top:457px;width:58px;height:1px;background:#f2f8fb;"></div>
<div style="left:1px;top:457px;width:1px;height:16px;background:#f2f8fb;"></div>
<div style="left:1px;top:473px;width:59px;height:1px;background:#0c1014;"></div>
<div style="left:59px;top:457px;width:1px;height:17px;background:#0c1014;"></div>
<div style="left:0.25px;top:460px;font:bold 11px/13px 'Liberation Sans', sans-serif;color:#000;letter-spacing:0.5px;white-space:pre;width:60px;text-align:center;">25</div>
<div style="left:60px;top:473px;width:685px;height:1px;background:#b6b6b6;"></div>
<div style="left:744px;top:457px;width:1px;height:17px;background:#b6b6b6;"></div>
<div style="left:61px;top:460px;font:normal 11px/13px 'Liberation Sans', sans-serif;color:#000;letter-spacing:-0.13px;white-space:pre;">Elfes</div>
<div style="left:60px;top:32px;width:684px;height:18px;background:#fff;"></div>
<div style="left:61px;top:50px;width:684px;height:1px;background:#c4d0d6;"></div>
<div style="left:60px;top:32px;width:684px;height:1px;background:#7a8a94;"></div>
<div style="left:60px;top:32px;width:1px;height:18px;background:#7a8a94;"></div>
<div style="left:61px;top:33px;width:683px;height:1px;background:#0c1014;"></div>
<div style="left:61px;top:33px;width:1px;height:17px;background:#0c1014;"></div>
<div style="left:65px;top:36px;font:normal 11px/13px 'Liberation Sans', sans-serif;color:#000;letter-spacing:-0.13px;white-space:pre;">Bad Strref</div>
<div style="left:62px;top:33px;width:682px;height:1px;background:#0c1014;"></div>
<div style="left:731px;top:34px;width:13px;height:8px;background:#9bb8c6;"></div>
<div style="left:731px;top:34px;width:12px;height:1px;background:#dce8ee;"></div>
<div style="left:731px;top:34px;width:1px;height:7px;background:#dce8ee;"></div>
<div style="left:731px;top:41px;width:13px;height:1px;background:#0c1014;"></div>
<div style="left:743px;top:34px;width:1px;height:8px;background:#0c1014;"></div>
<div style="left:736px;top:37px;width:3px;height:1px;background:#6a7f8a;"></div>
<div style="left:737px;top:36px;width:1px;height:1px;background:#6a7f8a;"></div>
<div style="left:731px;top:42px;width:13px;height:8px;background:#9bb8c6;"></div>
<div style="left:731px;top:42px;width:12px;height:1px;background:#dce8ee;"></div>
<div style="left:731px;top:42px;width:1px;height:7px;background:#dce8ee;"></div>
<div style="left:731px;top:49px;width:13px;height:1px;background:#0c1014;"></div>
<div style="left:743px;top:42px;width:1px;height:8px;background:#0c1014;"></div>
<div style="left:736px;top:45px;width:3px;height:1px;background:#6a7f8a;"></div>
<div style="left:737px;top:46px;width:1px;height:1px;background:#6a7f8a;"></div>
<div style="left:753px;top:0px;width:13px;height:461px;background:#d4e2e8;"></div>
<div style="left:753px;top:0px;width:13px;height:13px;background:#9bb8c6;"></div>
<div style="left:753px;top:0px;width:13px;height:1px;background:#d2e2ea;"></div>
<div style="left:753px;top:0px;width:1px;height:13px;background:#d2e2ea;"></div>
<div style="left:754px;top:1px;width:11px;height:1px;background:#e4eef3;"></div>
<div style="left:754px;top:1px;width:1px;height:11px;background:#e4eef3;"></div>
<div style="left:754px;top:11px;width:11px;height:1px;background:#86a0ae;"></div>
<div style="left:764px;top:1px;width:1px;height:11px;background:#86a0ae;"></div>
<div style="left:753px;top:12px;width:13px;height:1px;background:#0c1014;"></div>
<div style="left:765px;top:0px;width:1px;height:13px;background:#0c1014;"></div>
<div style="left:759px;top:5px;width:1px;height:1px;background:#000;"></div>
<div style="left:758px;top:6px;width:3px;height:1px;background:#000;"></div>
<div style="left:757px;top:7px;width:5px;height:1px;background:#000;"></div>
<div style="left:753px;top:448px;width:13px;height:13px;background:#9bb8c6;"></div>
<div style="left:753px;top:448px;width:13px;height:1px;background:#d2e2ea;"></div>
<div style="left:753px;top:448px;width:1px;height:13px;background:#d2e2ea;"></div>
<div style="left:754px;top:449px;width:11px;height:1px;background:#e4eef3;"></div>
<div style="left:754px;top:449px;width:1px;height:11px;background:#e4eef3;"></div>
<div style="left:754px;top:459px;width:11px;height:1px;background:#86a0ae;"></div>
<div style="left:764px;top:449px;width:1px;height:11px;background:#86a0ae;"></div>
<div style="left:753px;top:460px;width:13px;height:1px;background:#0c1014;"></div>
<div style="left:765px;top:448px;width:1px;height:13px;background:#0c1014;"></div>
<div style="left:757px;top:453px;width:5px;height:1px;background:#000;"></div>
<div style="left:758px;top:454px;width:3px;height:1px;background:#000;"></div>
<div style="left:759px;top:455px;width:1px;height:1px;background:#000;"></div>
<div style="left:753px;top:13px;width:13px;height:6px;background:#9bb8c6;"></div>
<div style="left:753px;top:13px;width:13px;height:1px;background:#d2e2ea;"></div>
<div style="left:753px;top:13px;width:1px;height:6px;background:#d2e2ea;"></div>
<div style="left:754px;top:14px;width:11px;height:1px;background:#e4eef3;"></div>
<div style="left:754px;top:14px;width:1px;height:4px;background:#e4eef3;"></div>
<div style="left:754px;top:17px;width:11px;height:1px;background:#86a0ae;"></div>
<div style="left:764px;top:14px;width:1px;height:4px;background:#86a0ae;"></div>
<div style="left:753px;top:18px;width:13px;height:1px;background:#0c1014;"></div>
<div style="left:765px;top:13px;width:1px;height:6px;background:#0c1014;"></div>
<div style="left:0px;top:461px;width:766px;height:13px;background:#d4e2e8;"></div>
<div style="left:0px;top:461px;width:13px;height:13px;background:#9bb8c6;"></div>
<div style="left:0px;top:461px;width:13px;height:1px;background:#d2e2ea;"></div>
<div style="left:0px;top:461px;width:1px;height:13px;background:#d2e2ea;"></div>
<div style="left:1px;top:462px;width:11px;height:1px;background:#e4eef3;"></div>
<div style="left:1px;top:462px;width:1px;height:11px;background:#e4eef3;"></div>
<div style="left:1px;top:472px;width:11px;height:1px;background:#86a0ae;"></div>
<div style="left:11px;top:462px;width:1px;height:11px;background:#86a0ae;"></div>
<div style="left:0px;top:473px;width:13px;height:1px;background:#0c1014;"></div>
<div style="left:12px;top:461px;width:1px;height:13px;background:#0c1014;"></div>
<div style="left:4px;top:467px;width:1px;height:1px;background:#000;"></div>
<div style="left:5px;top:466px;width:1px;height:3px;background:#000;"></div>
<div style="left:6px;top:465px;width:1px;height:5px;background:#000;"></div>
<div style="left:13px;top:461px;width:727px;height:13px;background:#9bb8c6;"></div>
<div style="left:13px;top:461px;width:727px;height:1px;background:#d2e2ea;"></div>
<div style="left:13px;top:461px;width:1px;height:13px;background:#d2e2ea;"></div>
<div style="left:14px;top:462px;width:725px;height:1px;background:#e4eef3;"></div>
<div style="left:14px;top:462px;width:1px;height:11px;background:#e4eef3;"></div>
<div style="left:14px;top:472px;width:725px;height:1px;background:#86a0ae;"></div>
<div style="left:738px;top:462px;width:1px;height:11px;background:#86a0ae;"></div>
<div style="left:13px;top:473px;width:727px;height:1px;background:#0c1014;"></div>
<div style="left:739px;top:461px;width:1px;height:13px;background:#0c1014;"></div>
<div style="left:740px;top:461px;width:13px;height:13px;background:#9bb8c6;"></div>
<div style="left:740px;top:461px;width:13px;height:1px;background:#d2e2ea;"></div>
<div style="left:740px;top:461px;width:1px;height:13px;background:#d2e2ea;"></div>
<div style="left:741px;top:462px;width:11px;height:1px;background:#e4eef3;"></div>
<div style="left:741px;top:462px;width:1px;height:11px;background:#e4eef3;"></div>
<div style="left:741px;top:472px;width:11px;height:1px;background:#86a0ae;"></div>
<div style="left:751px;top:462px;width:1px;height:11px;background:#86a0ae;"></div>
<div style="left:740px;top:473px;width:13px;height:1px;background:#0c1014;"></div>
<div style="left:752px;top:461px;width:1px;height:13px;background:#0c1014;"></div>
<div style="left:748px;top:467px;width:1px;height:1px;background:#000;"></div>
<div style="left:747px;top:466px;width:1px;height:3px;background:#000;"></div>
<div style="left:746px;top:465px;width:1px;height:5px;background:#000;"></div>
<div style="left:753px;top:461px;width:13px;height:13px;background:#9bb8c6;"></div>
</div>
</div>
<div style="left:4px;top:614px;width:890px;height:18px;background:#9bb8c6;"></div>
<div style="left:4px;top:614px;width:890px;height:1px;background:#6d8795;"></div>
<div style="left:4px;top:614px;width:1px;height:18px;background:#6d8795;"></div>
<div style="left:4px;top:631px;width:890px;height:1px;background:#f2f8fb;"></div>
<div style="left:893px;top:614px;width:1px;height:18px;background:#f2f8fb;"></div>
<svg style="position:absolute;left:880px;top:619px" width="13" height="13"><path d="M12 1L1 12M12 5L5 12M12 9L9 12" stroke="#f2f8fb" stroke-width="1"/><path d="M12 2L2 12M12 6L6 12M12 10L10 12" stroke="#6d8795" stroke-width="1.2"/></svg>
</body></html>
